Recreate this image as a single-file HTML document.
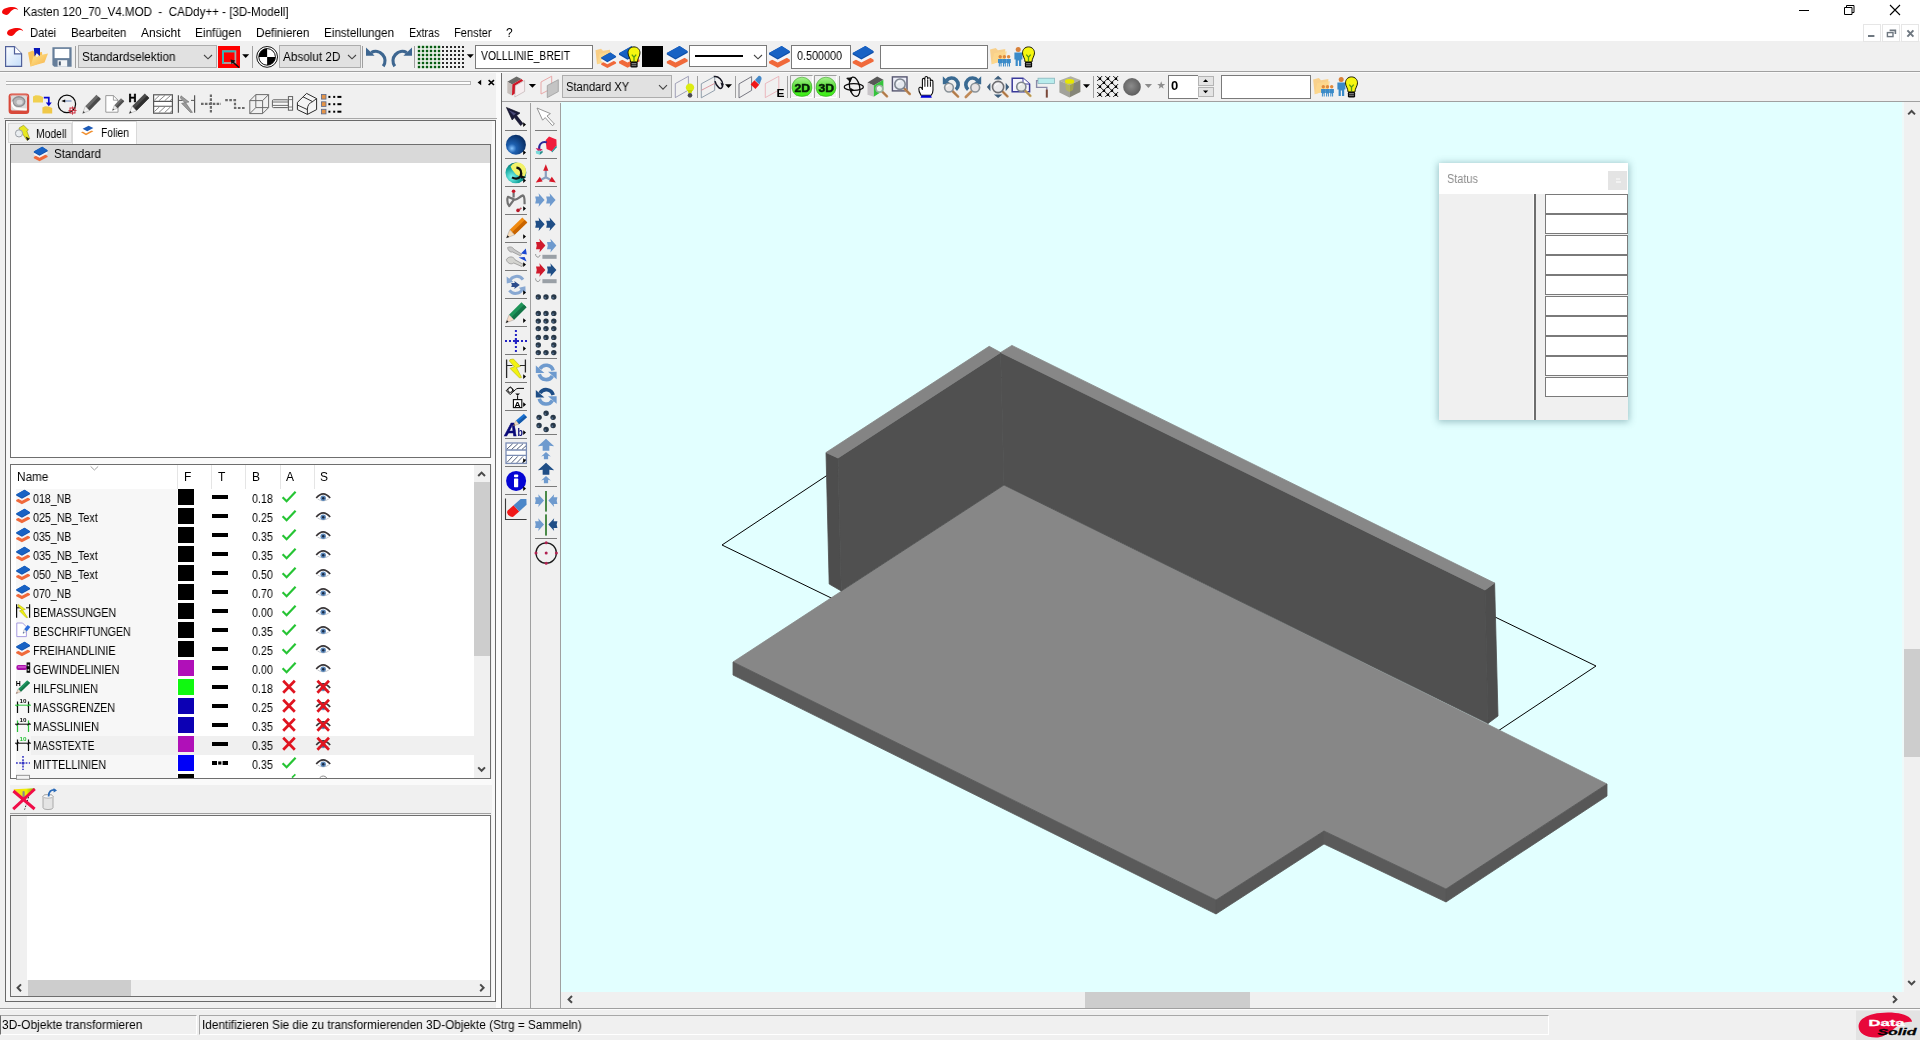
<!DOCTYPE html>
<html lang="de">
<head>
<meta charset="utf-8">
<title>Kasten 120_70_V4.MOD - CADdy++ - [3D-Modell]</title>
<style>
html,body{margin:0;padding:0}
body{width:1920px;height:1040px;overflow:hidden;position:relative;background:#f0f0f0;font-family:"Liberation Sans",sans-serif;font-size:12px;color:#000}
div,svg,span.t{position:absolute}
span.t{line-height:16px;white-space:pre;font-size:12px;will-change:transform}
svg{overflow:visible}
</style>
</head>
<body>
<!-- frame -->
<div style="left:0px;top:0px;width:1920px;height:41px;background:#fff;"></div>
<div style="left:0px;top:71px;width:1920px;height:1px;background:#a0a0a0;"></div>
<div style="left:0px;top:72px;width:1920px;height:1px;background:#fafafa;"></div>
<div style="left:6px;top:81px;width:465px;height:1px;background:#b4b4b4;"></div>
<div style="left:6px;top:82px;width:465px;height:2px;background:#fdfdfd;"></div>
<div style="left:6px;top:84px;width:465px;height:1px;background:#b4b4b4;"></div>
<div style="left:470px;top:81px;width:1px;height:4px;background:#b4b4b4;"></div>
<div style="left:496px;top:73px;width:5px;height:935px;background:#fbfbfb;"></div>
<div style="left:501px;top:73px;width:1px;height:935px;background:#6b6b6b;"></div>
<div style="left:4px;top:118px;width:493px;height:1px;background:#a8a8a8;"></div>
<div style="left:5px;top:120px;width:491px;height:882px;background:#f0f0f0;border:1px solid #696969;box-sizing:border-box;"></div>
<div style="left:492px;top:121px;width:3px;height:880px;background:#f8f8f8;"></div>
<div style="left:6px;top:458px;width:486px;height:6px;background:#fafafa;"></div>
<div style="left:6px;top:779px;width:486px;height:6px;background:#fafafa;"></div>
<div style="left:6px;top:121px;width:4px;height:880px;background:#f8f8f8;"></div>
<div style="left:8px;top:123px;width:64px;height:20px;background:#f0f0f0;border:1px solid #d9d9d9;box-sizing:border-box;"></div>
<div style="left:72px;top:121px;width:65px;height:23px;background:#fff;border:1px solid #d9d9d9;box-sizing:border-box;border-bottom:none;"></div>
<div style="left:10px;top:144px;width:481px;height:314px;background:#fff;border:1px solid #6e6e6e;box-sizing:border-box;"></div>
<div style="left:11px;top:145px;width:479px;height:18px;background:#d9d9d9;"></div>
<div style="left:10px;top:464px;width:481px;height:315px;background:#fff;border:1px solid #6e6e6e;box-sizing:border-box;"></div>
<div style="left:16px;top:489px;width:161px;height:289px;background:#f7f7f7;"></div>
<div style="left:177px;top:465px;width:1px;height:24px;background:#e5e5e5;"></div>
<div style="left:211px;top:465px;width:1px;height:24px;background:#e5e5e5;"></div>
<div style="left:245px;top:465px;width:1px;height:24px;background:#e5e5e5;"></div>
<div style="left:280px;top:465px;width:1px;height:24px;background:#e5e5e5;"></div>
<div style="left:314px;top:465px;width:1px;height:24px;background:#e5e5e5;"></div>
<div style="left:31px;top:736px;width:443px;height:19px;background:#f0f0f0;"></div>
<div style="left:474px;top:465px;width:16px;height:313px;background:#f0f0f0;"></div>
<div style="left:474px;top:482px;width:16px;height:174px;background:#cdcdcd;"></div>
<div style="left:10px;top:813px;width:481px;height:1px;background:#a0a0a0;"></div>
<div style="left:10px;top:815px;width:481px;height:182px;background:#fff;border:1px solid #6e6e6e;box-sizing:border-box;"></div>
<div style="left:11px;top:816px;width:16px;height:164px;background:#f0f0f0;"></div>
<div style="left:11px;top:980px;width:479px;height:16px;background:#f0f0f0;"></div>
<div style="left:28px;top:980px;width:103px;height:16px;background:#cdcdcd;"></div>
<div style="left:502px;top:101px;width:1418px;height:1px;background:#a0a0a0;"></div>
<div style="left:530px;top:103px;width:1px;height:905px;background:#a0a0a0;"></div>
<div style="left:560px;top:103px;width:1px;height:905px;background:#a0a0a0;"></div>
<div style="left:561px;top:102px;width:1343px;height:890px;background:#e2ffff;"></div>
<div style="left:1902px;top:102px;width:2px;height:890px;background:#eefafa;"></div>
<div style="left:1904px;top:102px;width:16px;height:890px;background:#f0f0f0;"></div>
<div style="left:1904px;top:649px;width:16px;height:108px;background:#cdcdcd;"></div>
<div style="left:561px;top:992px;width:1343px;height:16px;background:#f0f0f0;"></div>
<div style="left:1085px;top:992px;width:165px;height:16px;background:#cdcdcd;"></div>
<div style="left:0px;top:1008px;width:1920px;height:1px;background:#a0a0a0;"></div>
<div style="left:0px;top:1015px;width:197px;height:20px;background:#f0f0f0;box-sizing:border-box;border-top:1px solid #a8a8a8;border-left:1px solid #6e6e6e;border-right:1px solid #fff;border-bottom:1px solid #fff;"></div>
<div style="left:199px;top:1015px;width:1350px;height:20px;background:#f0f0f0;box-sizing:border-box;border-top:1px solid #a8a8a8;border-left:1px solid #a8a8a8;border-right:1px solid #fff;border-bottom:1px solid #fff;"></div>
<div style="left:0px;top:1009px;width:1920px;height:1px;background:#fbfbfb;"></div>
<!-- model -->
<svg style="left:561px;top:102px" width="1343" height="890" viewBox="561 102 1343 890" shape-rendering="auto"><polygon points="722,545 986,370 1596,666 1332,841" fill="none" stroke="#000" stroke-width="1"/><polygon points="733,662 1004,485 1487,724 1607,784 1446,889 1324,831 1216,900" fill="#878787" stroke="#878787" stroke-width="0.8" stroke-linejoin="round" /><polygon points="733,662 1216,900 1216,914 733,675" fill="#5a5a5a" stroke="#5a5a5a" stroke-width="0.8" stroke-linejoin="round" /><polygon points="1216,900 1324,831 1324,844 1216,914" fill="#575757" stroke="#575757" stroke-width="0.8" stroke-linejoin="round" /><polygon points="1324,831 1446,889 1446,902 1324,844" fill="#5a5a5a" stroke="#5a5a5a" stroke-width="0.8" stroke-linejoin="round" /><polygon points="1446,889 1607,784 1607,796 1446,902" fill="#575757" stroke="#575757" stroke-width="0.8" stroke-linejoin="round" /><polygon points="826,452.5 838,458 841.3,591 829.2,584" fill="#4d4d4d" stroke="#4d4d4d" stroke-width="0.8" stroke-linejoin="round" /><polygon points="838,458 1000.6,352.5 1004,485 841.3,591" fill="#505050" stroke="#505050" stroke-width="0.8" stroke-linejoin="round" /><polygon points="826,452.5 989.2,346.3 1000.6,352.5 838,458" fill="#848484" stroke="#848484" stroke-width="0.8" stroke-linejoin="round" /><polygon points="1000.6,352.5 1485,590 1488,723.4 1004,485" fill="#505050" stroke="#505050" stroke-width="0.8" stroke-linejoin="round" /><polygon points="1485,590 1494.6,583 1498,716 1488,723.4" fill="#4d4d4d" stroke="#4d4d4d" stroke-width="0.8" stroke-linejoin="round" /><polygon points="1000.6,352.5 1011.9,345.4 1494.6,583 1485,590" fill="#878787" stroke="#878787" stroke-width="0.8" stroke-linejoin="round" /></svg>
<!-- texts -->
<span class="t" style="left:23.0px;top:4px;transform:scaleX(0.9662);transform-origin:0 0;">Kasten 120_70_V4.MOD  -  CADdy++ - [3D-Modell]</span>
<span class="t" style="left:30.0px;top:25px;transform:scaleX(0.9352);transform-origin:0 0;">Datei</span>
<span class="t" style="left:70.8px;top:25px;transform:scaleX(0.9544);transform-origin:0 0;">Bearbeiten</span>
<span class="t" style="left:140.8px;top:25px;transform:scaleX(1.0036);transform-origin:0 0;">Ansicht</span>
<span class="t" style="left:194.8px;top:25px;transform:scaleX(0.9794);transform-origin:0 0;">Einfügen</span>
<span class="t" style="left:255.8px;top:25px;transform:scaleX(0.9762);transform-origin:0 0;">Definieren</span>
<span class="t" style="left:324.2px;top:25px;transform:scaleX(0.9714);transform-origin:0 0;">Einstellungen</span>
<span class="t" style="left:409.0px;top:25px;transform:scaleX(0.8966);transform-origin:0 0;">Extras</span>
<span class="t" style="left:454.0px;top:25px;transform:scaleX(0.9217);transform-origin:0 0;">Fenster</span>
<span class="t" style="left:506.2px;top:25px;">?</span>
<span class="t" style="left:1.8px;top:1017px;transform:scaleX(0.993);transform-origin:0 0;">3D-Objekte transformieren</span>
<span class="t" style="left:201.5px;top:1017px;transform:scaleX(0.9824);transform-origin:0 0;">Identifizieren Sie die zu transformierenden 3D-Objekte (Strg = Sammeln)</span>
<span class="t" style="left:35.5px;top:126px;transform:scaleX(0.8626);transform-origin:0 0;">Modell</span>
<span class="t" style="left:100.5px;top:125px;transform:scaleX(0.8566);transform-origin:0 0;">Folien</span>
<span class="t" style="left:53.5px;top:146px;transform:scaleX(0.965);transform-origin:0 0;">Standard</span>
<span class="t" style="left:17.1px;top:469px;transform:scaleX(0.9808);transform-origin:0 0;">Name</span>
<span class="t" style="left:184.3px;top:469px;">F</span>
<span class="t" style="left:217.8px;top:469px;">T</span>
<span class="t" style="left:252.0px;top:469px;">B</span>
<span class="t" style="left:286.0px;top:469px;">A</span>
<span class="t" style="left:320.0px;top:469px;">S</span>
<span class="t" style="left:32.9px;top:491px;transform:scaleX(0.8853);transform-origin:0 0;">018_NB</span>
<span class="t" style="left:251.7px;top:491px;transform:scaleX(0.8904);transform-origin:0 0;">0.18</span>
<span class="t" style="left:32.9px;top:510px;transform:scaleX(0.898);transform-origin:0 0;">025_NB_Text</span>
<span class="t" style="left:251.7px;top:510px;transform:scaleX(0.8904);transform-origin:0 0;">0.25</span>
<span class="t" style="left:32.9px;top:529px;transform:scaleX(0.8853);transform-origin:0 0;">035_NB</span>
<span class="t" style="left:251.7px;top:529px;transform:scaleX(0.8904);transform-origin:0 0;">0.35</span>
<span class="t" style="left:32.9px;top:548px;transform:scaleX(0.898);transform-origin:0 0;">035_NB_Text</span>
<span class="t" style="left:251.7px;top:548px;transform:scaleX(0.8904);transform-origin:0 0;">0.35</span>
<span class="t" style="left:32.9px;top:567px;transform:scaleX(0.898);transform-origin:0 0;">050_NB_Text</span>
<span class="t" style="left:251.7px;top:567px;transform:scaleX(0.8904);transform-origin:0 0;">0.50</span>
<span class="t" style="left:32.9px;top:586px;transform:scaleX(0.8853);transform-origin:0 0;">070_NB</span>
<span class="t" style="left:251.7px;top:586px;transform:scaleX(0.8904);transform-origin:0 0;">0.70</span>
<span class="t" style="left:32.9px;top:605px;transform:scaleX(0.889);transform-origin:0 0;">BEMASSUNGEN</span>
<span class="t" style="left:251.7px;top:605px;transform:scaleX(0.8904);transform-origin:0 0;">0.00</span>
<span class="t" style="left:32.9px;top:624px;transform:scaleX(0.8766);transform-origin:0 0;">BESCHRIFTUNGEN</span>
<span class="t" style="left:251.7px;top:624px;transform:scaleX(0.8904);transform-origin:0 0;">0.35</span>
<span class="t" style="left:32.9px;top:643px;transform:scaleX(0.9052);transform-origin:0 0;">FREIHANDLINIE</span>
<span class="t" style="left:251.7px;top:643px;transform:scaleX(0.8904);transform-origin:0 0;">0.25</span>
<span class="t" style="left:32.9px;top:662px;transform:scaleX(0.9009);transform-origin:0 0;">GEWINDELINIEN</span>
<span class="t" style="left:251.7px;top:662px;transform:scaleX(0.8904);transform-origin:0 0;">0.00</span>
<span class="t" style="left:32.9px;top:681px;transform:scaleX(0.8942);transform-origin:0 0;">HILFSLINIEN</span>
<span class="t" style="left:251.7px;top:681px;transform:scaleX(0.8904);transform-origin:0 0;">0.18</span>
<span class="t" style="left:32.9px;top:700px;transform:scaleX(0.8847);transform-origin:0 0;">MASSGRENZEN</span>
<span class="t" style="left:251.7px;top:700px;transform:scaleX(0.8904);transform-origin:0 0;">0.25</span>
<span class="t" style="left:32.9px;top:719px;transform:scaleX(0.908);transform-origin:0 0;">MASSLINIEN</span>
<span class="t" style="left:251.7px;top:719px;transform:scaleX(0.8904);transform-origin:0 0;">0.35</span>
<span class="t" style="left:32.9px;top:738px;transform:scaleX(0.8433);transform-origin:0 0;">MASSTEXTE</span>
<span class="t" style="left:251.7px;top:738px;transform:scaleX(0.8904);transform-origin:0 0;">0.35</span>
<span class="t" style="left:32.9px;top:757px;transform:scaleX(0.8973);transform-origin:0 0;">MITTELLINIEN</span>
<span class="t" style="left:251.7px;top:757px;transform:scaleX(0.8904);transform-origin:0 0;">0.35</span>
<!-- icons_top -->
<div style="left:78px;top:45px;width:139px;height:23px;background:#e1e1e1;border:1px solid #adadad;box-sizing:border-box;"></div>
<span class="t" style="left:81.8px;top:49px;transform:scaleX(0.9721);transform-origin:0 0;">Standardselektion</span>
<div style="left:279px;top:45px;width:82px;height:23px;background:#e1e1e1;border:1px solid #adadad;box-sizing:border-box;"></div>
<span class="t" style="left:282.8px;top:49px;transform:scaleX(0.9778);transform-origin:0 0;">Absolut 2D</span>
<div style="left:475px;top:45px;width:118px;height:24px;background:#fff;border:1px solid #7a7a7a;box-sizing:border-box;"></div>
<span class="t" style="left:480.8px;top:48px;transform:scaleX(0.8664);transform-origin:0 0;">VOLLLINIE_BREIT</span>
<div style="left:689px;top:45px;width:78px;height:22px;background:#fff;border:1px solid #7a7a7a;box-sizing:border-box;"></div>
<div style="left:791px;top:45px;width:60px;height:24px;background:#fff;border:1px solid #7a7a7a;box-sizing:border-box;"></div>
<span class="t" style="left:796.8px;top:48px;transform:scaleX(0.8989);transform-origin:0 0;">0.500000</span>
<div style="left:880px;top:45px;width:108px;height:24px;background:#fff;border:1px solid #7a7a7a;box-sizing:border-box;"></div>
<div style="left:562px;top:75px;width:110px;height:23px;background:#e1e1e1;border:1px solid #adadad;box-sizing:border-box;"></div>
<span class="t" style="left:566.0px;top:79px;transform:scaleX(0.9288);transform-origin:0 0;">Standard XY</span>
<div style="left:1221px;top:75px;width:90px;height:24px;background:#fff;border:1px solid #7a7a7a;box-sizing:border-box;"></div>
<svg style="left:0;top:0" width="1920" height="110" viewBox="0 0 1920 110"><defs><linearGradient id="gdoc" x1="0" y1="0" x2="1" y2="1"><stop offset="0" stop-color="#fdfeff"/><stop offset="1" stop-color="#c4ddfa"/></linearGradient><linearGradient id="gfold" x1="0" y1="0" x2="1" y2="1"><stop offset="0" stop-color="#fde890"/><stop offset="1" stop-color="#f8b048"/></linearGradient><linearGradient id="g2d" x1="0" y1="0" x2="0" y2="1"><stop offset="0" stop-color="#a8f090"/><stop offset="0.45" stop-color="#60e040"/><stop offset="1" stop-color="#38f010"/></linearGradient><radialGradient id="gsph" cx="0.45" cy="0.45" r="0.6"><stop offset="0" stop-color="#8c8c8c"/><stop offset="1" stop-color="#5a5a5a"/></radialGradient></defs><path d="M5.6,46.6 H14.5 L21.6,53.8 V66.3 H5.6Z" fill="url(#gdoc)" stroke="#50609a" stroke-width="1.2"/><path d="M14.5,46.6 V53.8 H21.6" fill="#fff" stroke="#50609a" stroke-width="1.2"/><path d="M28,52.5 L33,50.5 L35,53 L42,52 L42.5,62 L30.5,66.5Z" fill="#f8c058"/><path d="M30.5,66.5 L33.5,56.5 L48,53.5 L44.5,62.5Z" fill="url(#gfold)"/><path d="M33.8,48 H40 V56 L36.8,53.2 L34.6,56.5Z" fill="#0a18b8"/><path d="M36.8,53.2 L38.6,55.4 L36.9,57.2 L35.6,55.4Z" fill="#e8ecff"/><path d="M52.4,47.3 H71.6 V66.7 H54.2 L52.4,65Z" fill="#667e9a"/><rect x="54.6" y="48.9" width="14.7" height="9.2" fill="#fff"/><rect x="57.6" y="60.2" width="9.6" height="6.5" fill="#f4f6f8"/><rect x="58.8" y="61.4" width="2" height="4" fill="#4a5a70"/><rect x="75" y="46" width="1" height="22" fill="#a0a0a0"/><rect x="252" y="46" width="1" height="22" fill="#a0a0a0"/><rect x="362" y="46" width="1" height="22" fill="#a0a0a0"/><rect x="414" y="46" width="1" height="22" fill="#a0a0a0"/><rect x="218" y="46" width="22" height="22" fill="#f00"/><rect x="223" y="51.3" width="12.4" height="11.7" fill="none" stroke="#a8a8a8" stroke-width="1.8"/><path d="M223,63.5 V51.3 H235.5" fill="none" stroke="#2ab8b8" stroke-width="1.8"/><path d="M230.5,59.5 L235.2,60.6 L234,62 L239.5,67 L238.5,68 L232.8,63 L231.6,64.2Z" fill="#101010"/><path d="M242.2,54.3 h7 l-3.5,3.8Z" fill="#000"/><circle cx="267.1" cy="56.9" r="10.4" fill="#fff" stroke="#111" stroke-width="1"/><circle cx="267.1" cy="56.9" r="8.3" fill="#fff" stroke="#111" stroke-width="1"/><path d="M267.1,56.9 V48.6 A8.3,8.3 0 0 0 258.8,56.9Z" fill="#000"/><path d="M267.1,56.9 V65.2 A8.3,8.3 0 0 0 275.4,56.9Z" fill="#000"/><path d="M371.2,52.6 A9.3,9.3 0 0 1 383.2,66.2" fill="none" stroke="#3d6690" stroke-width="3.2"/><path d="M366,47.6 V55.8 H374.6Z" fill="#3d6690"/><path d="M406.8,52.6 A9.3,9.3 0 0 0 394.8,66.2" fill="none" stroke="#3d6690" stroke-width="3.2"/><path d="M412,47.6 V55.8 H403.4Z" fill="#3d6690"/><rect x="417.8" y="45.8" width="2.4" height="2.4" fill="#0b7a0b"/><rect x="418.4" y="46.4" width="1.2" height="1.2" fill="#022"/><rect x="421.8" y="45.8" width="2.4" height="2.4" fill="#0b7a0b"/><rect x="422.4" y="46.4" width="1.2" height="1.2" fill="#022"/><rect x="425.8" y="45.8" width="2.4" height="2.4" fill="#0b7a0b"/><rect x="426.4" y="46.4" width="1.2" height="1.2" fill="#022"/><rect x="429.8" y="45.8" width="2.4" height="2.4" fill="#0b7a0b"/><rect x="430.4" y="46.4" width="1.2" height="1.2" fill="#022"/><rect x="433.8" y="45.8" width="2.4" height="2.4" fill="#0b7a0b"/><rect x="434.4" y="46.4" width="1.2" height="1.2" fill="#022"/><rect x="437.8" y="45.8" width="2.4" height="2.4" fill="#0b7a0b"/><rect x="438.4" y="46.4" width="1.2" height="1.2" fill="#022"/><rect x="442.0" y="46.0" width="2" height="2" fill="#2a2a2a"/><rect x="446.0" y="46.0" width="2" height="2" fill="#2a2a2a"/><rect x="450.0" y="46.0" width="2" height="2" fill="#2a2a2a"/><rect x="454.0" y="46.0" width="2" height="2" fill="#2a2a2a"/><rect x="458.0" y="46.0" width="2" height="2" fill="#2a2a2a"/><rect x="462.0" y="46.0" width="2" height="2" fill="#2a2a2a"/><rect x="417.8" y="49.8" width="2.4" height="2.4" fill="#0b7a0b"/><rect x="418.4" y="50.4" width="1.2" height="1.2" fill="#022"/><rect x="421.8" y="49.8" width="2.4" height="2.4" fill="#0b7a0b"/><rect x="422.4" y="50.4" width="1.2" height="1.2" fill="#022"/><rect x="425.8" y="49.8" width="2.4" height="2.4" fill="#0b7a0b"/><rect x="426.4" y="50.4" width="1.2" height="1.2" fill="#022"/><rect x="429.8" y="49.8" width="2.4" height="2.4" fill="#0b7a0b"/><rect x="430.4" y="50.4" width="1.2" height="1.2" fill="#022"/><rect x="433.8" y="49.8" width="2.4" height="2.4" fill="#0b7a0b"/><rect x="434.4" y="50.4" width="1.2" height="1.2" fill="#022"/><rect x="437.8" y="49.8" width="2.4" height="2.4" fill="#0b7a0b"/><rect x="438.4" y="50.4" width="1.2" height="1.2" fill="#022"/><rect x="442.0" y="50.0" width="2" height="2" fill="#2a2a2a"/><rect x="446.0" y="50.0" width="2" height="2" fill="#2a2a2a"/><rect x="450.0" y="50.0" width="2" height="2" fill="#2a2a2a"/><rect x="454.0" y="50.0" width="2" height="2" fill="#2a2a2a"/><rect x="458.0" y="50.0" width="2" height="2" fill="#2a2a2a"/><rect x="462.0" y="50.0" width="2" height="2" fill="#2a2a2a"/><rect x="417.8" y="53.8" width="2.4" height="2.4" fill="#0b7a0b"/><rect x="418.4" y="54.4" width="1.2" height="1.2" fill="#022"/><rect x="421.8" y="53.8" width="2.4" height="2.4" fill="#0b7a0b"/><rect x="422.4" y="54.4" width="1.2" height="1.2" fill="#022"/><rect x="425.8" y="53.8" width="2.4" height="2.4" fill="#0b7a0b"/><rect x="426.4" y="54.4" width="1.2" height="1.2" fill="#022"/><rect x="429.8" y="53.8" width="2.4" height="2.4" fill="#0b7a0b"/><rect x="430.4" y="54.4" width="1.2" height="1.2" fill="#022"/><rect x="433.8" y="53.8" width="2.4" height="2.4" fill="#0b7a0b"/><rect x="434.4" y="54.4" width="1.2" height="1.2" fill="#022"/><rect x="437.8" y="53.8" width="2.4" height="2.4" fill="#0b7a0b"/><rect x="438.4" y="54.4" width="1.2" height="1.2" fill="#022"/><rect x="442.0" y="54.0" width="2" height="2" fill="#2a2a2a"/><rect x="446.0" y="54.0" width="2" height="2" fill="#2a2a2a"/><rect x="450.0" y="54.0" width="2" height="2" fill="#2a2a2a"/><rect x="454.0" y="54.0" width="2" height="2" fill="#2a2a2a"/><rect x="458.0" y="54.0" width="2" height="2" fill="#2a2a2a"/><rect x="462.0" y="54.0" width="2" height="2" fill="#2a2a2a"/><rect x="417.8" y="57.8" width="2.4" height="2.4" fill="#0b7a0b"/><rect x="418.4" y="58.4" width="1.2" height="1.2" fill="#022"/><rect x="421.8" y="57.8" width="2.4" height="2.4" fill="#0b7a0b"/><rect x="422.4" y="58.4" width="1.2" height="1.2" fill="#022"/><rect x="425.8" y="57.8" width="2.4" height="2.4" fill="#0b7a0b"/><rect x="426.4" y="58.4" width="1.2" height="1.2" fill="#022"/><rect x="429.8" y="57.8" width="2.4" height="2.4" fill="#0b7a0b"/><rect x="430.4" y="58.4" width="1.2" height="1.2" fill="#022"/><rect x="433.8" y="57.8" width="2.4" height="2.4" fill="#0b7a0b"/><rect x="434.4" y="58.4" width="1.2" height="1.2" fill="#022"/><rect x="437.8" y="57.8" width="2.4" height="2.4" fill="#0b7a0b"/><rect x="438.4" y="58.4" width="1.2" height="1.2" fill="#022"/><rect x="442.0" y="58.0" width="2" height="2" fill="#2a2a2a"/><rect x="446.0" y="58.0" width="2" height="2" fill="#2a2a2a"/><rect x="450.0" y="58.0" width="2" height="2" fill="#2a2a2a"/><rect x="454.0" y="58.0" width="2" height="2" fill="#2a2a2a"/><rect x="458.0" y="58.0" width="2" height="2" fill="#2a2a2a"/><rect x="462.0" y="58.0" width="2" height="2" fill="#2a2a2a"/><rect x="417.8" y="61.8" width="2.4" height="2.4" fill="#0b7a0b"/><rect x="418.4" y="62.4" width="1.2" height="1.2" fill="#022"/><rect x="421.8" y="61.8" width="2.4" height="2.4" fill="#0b7a0b"/><rect x="422.4" y="62.4" width="1.2" height="1.2" fill="#022"/><rect x="425.8" y="61.8" width="2.4" height="2.4" fill="#0b7a0b"/><rect x="426.4" y="62.4" width="1.2" height="1.2" fill="#022"/><rect x="429.8" y="61.8" width="2.4" height="2.4" fill="#0b7a0b"/><rect x="430.4" y="62.4" width="1.2" height="1.2" fill="#022"/><rect x="433.8" y="61.8" width="2.4" height="2.4" fill="#0b7a0b"/><rect x="434.4" y="62.4" width="1.2" height="1.2" fill="#022"/><rect x="437.8" y="61.8" width="2.4" height="2.4" fill="#0b7a0b"/><rect x="438.4" y="62.4" width="1.2" height="1.2" fill="#022"/><rect x="442.0" y="62.0" width="2" height="2" fill="#2a2a2a"/><rect x="446.0" y="62.0" width="2" height="2" fill="#2a2a2a"/><rect x="450.0" y="62.0" width="2" height="2" fill="#2a2a2a"/><rect x="454.0" y="62.0" width="2" height="2" fill="#2a2a2a"/><rect x="458.0" y="62.0" width="2" height="2" fill="#2a2a2a"/><rect x="462.0" y="62.0" width="2" height="2" fill="#2a2a2a"/><rect x="417.8" y="65.8" width="2.4" height="2.4" fill="#0b7a0b"/><rect x="418.4" y="66.4" width="1.2" height="1.2" fill="#022"/><rect x="421.8" y="65.8" width="2.4" height="2.4" fill="#0b7a0b"/><rect x="422.4" y="66.4" width="1.2" height="1.2" fill="#022"/><rect x="425.8" y="65.8" width="2.4" height="2.4" fill="#0b7a0b"/><rect x="426.4" y="66.4" width="1.2" height="1.2" fill="#022"/><rect x="429.8" y="65.8" width="2.4" height="2.4" fill="#0b7a0b"/><rect x="430.4" y="66.4" width="1.2" height="1.2" fill="#022"/><rect x="433.8" y="65.8" width="2.4" height="2.4" fill="#0b7a0b"/><rect x="434.4" y="66.4" width="1.2" height="1.2" fill="#022"/><rect x="437.8" y="65.8" width="2.4" height="2.4" fill="#0b7a0b"/><rect x="438.4" y="66.4" width="1.2" height="1.2" fill="#022"/><rect x="442.0" y="66.0" width="2" height="2" fill="#2a2a2a"/><rect x="446.0" y="66.0" width="2" height="2" fill="#2a2a2a"/><rect x="450.0" y="66.0" width="2" height="2" fill="#2a2a2a"/><rect x="454.0" y="66.0" width="2" height="2" fill="#2a2a2a"/><rect x="458.0" y="66.0" width="2" height="2" fill="#2a2a2a"/><rect x="462.0" y="66.0" width="2" height="2" fill="#2a2a2a"/><path d="M466.8,54.3 h7 l-3.5,3.8Z" fill="#000"/><g transform="translate(595 48.2)"><path d="M0.5,2 L6,0.5 L8,2.5 L15,1.5 L15,12 L2,16Z" fill="#fbc56a" opacity="0.8"/><path d="M2,16 L4.5,5.5 L16.5,3.5 L15,12Z" fill="#fdd98e" opacity="0.8"/></g><g transform="translate(601.2 52.5) scale(0.71)"><path d="M0,15.6 L12.7,8.6 L20.9,13.8 L20.9,15.6 L8.7,21.8 L0,17.2Z" fill="#f0693a"/><path d="M0,10.4 L12.7,3.4 L20.9,8.6 L20.9,10.2 L8.7,16.6 L0,12Z" fill="#f4f4f8"/><path d="M0,7 L12.7,0 L20.9,5.2 L20.9,6.8 L8.7,13.6 L0,8.6Z" fill="#0f4fa8"/><path d="M0,7 L12.7,0 L20.9,5.2 L8.7,12.3Z" fill="#1862c4"/></g><g transform="translate(619 46.3) scale(0.98)"><path d="M0,15.6 L12.7,8.6 L20.9,13.8 L20.9,15.6 L8.7,21.8 L0,17.2Z" fill="#f0693a"/><path d="M0,10.4 L12.7,3.4 L20.9,8.6 L20.9,10.2 L8.7,16.6 L0,12Z" fill="#f4f4f8"/><path d="M0,7 L12.7,0 L20.9,5.2 L20.9,6.8 L8.7,13.6 L0,8.6Z" fill="#0f4fa8"/><path d="M0,7 L12.7,0 L20.9,5.2 L8.7,12.3Z" fill="#1862c4"/></g><g transform="translate(634 46.6)"><path d="M0,0.3 C3.6,0.3 6,3 6,6.2 C6,9.6 3.7,11.2 3.4,15.4 L-3.4,15.4 C-3.7,11.2 -6,9.6 -6,6.2 C-6,3 -3.6,0.3 0,0.3Z" fill="#f6f610" stroke="#1a1a00" stroke-width="1"/><path d="M-2.2,8 L0,10.6 L2.2,8 M0,10.6 L0,15" fill="none" stroke="#5a9a14" stroke-width="1.3"/><rect x="-3.6" y="15.2" width="7.2" height="5.8" rx="1.4" fill="#0a0a0a"/><rect x="-2.4" y="16.6" width="4.8" height="1.1" fill="#9a9a9a"/><rect x="-2.4" y="18.5" width="4.8" height="1" fill="#777"/></g><rect x="642" y="46" width="21" height="21" fill="#000"/><g transform="translate(666.8 46)"><path d="M0,15.6 L12.7,8.6 L20.9,13.8 L20.9,15.6 L8.7,21.8 L0,17.2Z" fill="#f0693a"/><path d="M0,10.4 L12.7,3.4 L20.9,8.6 L20.9,10.2 L8.7,16.6 L0,12Z" fill="#f4f4f8"/><path d="M0,7 L12.7,0 L20.9,5.2 L20.9,6.8 L8.7,13.6 L0,8.6Z" fill="#0f4fa8"/><path d="M0,7 L12.7,0 L20.9,5.2 L8.7,12.3Z" fill="#1862c4"/></g><g transform="translate(769 46)"><path d="M0,15.6 L12.7,8.6 L20.9,13.8 L20.9,15.6 L8.7,21.8 L0,17.2Z" fill="#f0693a"/><path d="M0,10.4 L12.7,3.4 L20.9,8.6 L20.9,10.2 L8.7,16.6 L0,12Z" fill="#f4f4f8"/><path d="M0,7 L12.7,0 L20.9,5.2 L20.9,6.8 L8.7,13.6 L0,8.6Z" fill="#0f4fa8"/><path d="M0,7 L12.7,0 L20.9,5.2 L8.7,12.3Z" fill="#1862c4"/></g><g transform="translate(852.7 46)"><path d="M0,15.6 L12.7,8.6 L20.9,13.8 L20.9,15.6 L8.7,21.8 L0,17.2Z" fill="#f0693a"/><path d="M0,10.4 L12.7,3.4 L20.9,8.6 L20.9,10.2 L8.7,16.6 L0,12Z" fill="#f4f4f8"/><path d="M0,7 L12.7,0 L20.9,5.2 L20.9,6.8 L8.7,13.6 L0,8.6Z" fill="#0f4fa8"/><path d="M0,7 L12.7,0 L20.9,5.2 L8.7,12.3Z" fill="#1862c4"/></g><rect x="695" y="55" width="48" height="2" fill="#000"/><path d="M754,55 l4.0,3.8 l4.0,-3.8" fill="none" stroke="#444" stroke-width="1.1"/><g transform="translate(989.5 47.5) scale(1.05)"><path d="M0.5,2 L6,0.5 L8,2.5 L15,1.5 L15,12 L2,16Z" fill="#fbc56a" opacity="0.75"/><path d="M2,16 L4.5,5.5 L16.5,3.5 L15,12Z" fill="#fdd98e" opacity="0.75"/></g><g transform="translate(998.0 55.1)"><circle cx="2.2" cy="1.6" r="1.7" fill="#e08a3c"/><path d="M0,4 h4.4 v4 h-0.8 v3.5 h-1 v-3 h-0.8 v3 h-1 v-3.5 h-0.8Z" fill="#3a8ac8"/><circle cx="6.4" cy="1.6" r="1.7" fill="#e08a3c"/><path d="M4.2,4 h4.4 v4 h-0.8 v3.5 h-1 v-3 h-0.8 v3 h-1 v-3.5 h-0.8Z" fill="#3a8ac8"/><circle cx="10.600000000000001" cy="1.6" r="1.7" fill="#e08a3c"/><path d="M8.4,4 h4.4 v4 h-0.8 v3.5 h-1 v-3 h-0.8 v3 h-1 v-3.5 h-0.8Z" fill="#3a8ac8"/></g><g transform="translate(1312.6 77.5) scale(1.05)"><path d="M0.5,2 L6,0.5 L8,2.5 L15,1.5 L15,12 L2,16Z" fill="#fbc56a" opacity="0.75"/><path d="M2,16 L4.5,5.5 L16.5,3.5 L15,12Z" fill="#fdd98e" opacity="0.75"/></g><g transform="translate(1321.1 85.1)"><circle cx="2.2" cy="1.6" r="1.7" fill="#e08a3c"/><path d="M0,4 h4.4 v4 h-0.8 v3.5 h-1 v-3 h-0.8 v3 h-1 v-3.5 h-0.8Z" fill="#3a8ac8"/><circle cx="6.4" cy="1.6" r="1.7" fill="#e08a3c"/><path d="M4.2,4 h4.4 v4 h-0.8 v3.5 h-1 v-3 h-0.8 v3 h-1 v-3.5 h-0.8Z" fill="#3a8ac8"/><circle cx="10.600000000000001" cy="1.6" r="1.7" fill="#e08a3c"/><path d="M8.4,4 h4.4 v4 h-0.8 v3.5 h-1 v-3 h-0.8 v3 h-1 v-3.5 h-0.8Z" fill="#3a8ac8"/></g><g transform="translate(1014 46.8)"><circle cx="4.2" cy="2.6" r="2.5" fill="#d8803a"/><path d="M0.4,5.6 h8 v7 h-1.2 v6.6 h-2.2 v-5.6 h-1.2 v5.6 h-2.2 v-6.6 h-1.2Z" fill="#3a8ac8"/></g><g transform="translate(1028.5 46.599999999999994)"><path d="M0,0.3 C3.6,0.3 6,3 6,6.2 C6,9.6 3.7,11.2 3.4,15.4 L-3.4,15.4 C-3.7,11.2 -6,9.6 -6,6.2 C-6,3 -3.6,0.3 0,0.3Z" fill="#f6f610" stroke="#1a1a00" stroke-width="1"/><path d="M-2.2,8 L0,10.6 L2.2,8 M0,10.6 L0,15" fill="none" stroke="#5a9a14" stroke-width="1.3"/><rect x="-3.6" y="15.2" width="7.2" height="5.8" rx="1.4" fill="#0a0a0a"/><rect x="-2.4" y="16.6" width="4.8" height="1.1" fill="#9a9a9a"/><rect x="-2.4" y="18.5" width="4.8" height="1" fill="#777"/></g><g transform="translate(1337 76.8)"><circle cx="4.2" cy="2.6" r="2.5" fill="#d8803a"/><path d="M0.4,5.6 h8 v7 h-1.2 v6.6 h-2.2 v-5.6 h-1.2 v5.6 h-2.2 v-6.6 h-1.2Z" fill="#3a8ac8"/></g><g transform="translate(1351.5 76.6)"><path d="M0,0.3 C3.6,0.3 6,3 6,6.2 C6,9.6 3.7,11.2 3.4,15.4 L-3.4,15.4 C-3.7,11.2 -6,9.6 -6,6.2 C-6,3 -3.6,0.3 0,0.3Z" fill="#f6f610" stroke="#1a1a00" stroke-width="1"/><path d="M-2.2,8 L0,10.6 L2.2,8 M0,10.6 L0,15" fill="none" stroke="#5a9a14" stroke-width="1.3"/><rect x="-3.6" y="15.2" width="7.2" height="5.8" rx="1.4" fill="#0a0a0a"/><rect x="-2.4" y="16.6" width="4.8" height="1.1" fill="#9a9a9a"/><rect x="-2.4" y="18.5" width="4.8" height="1" fill="#777"/></g><path d="M204,55 l4.0,3.8 l4.0,-3.8" fill="none" stroke="#444" stroke-width="1.1"/><path d="M348,55 l4.0,3.8 l4.0,-3.8" fill="none" stroke="#444" stroke-width="1.1"/></svg>
<!-- icons_top2 -->
<div style="left:1168px;top:75px;width:30px;height:24px;background:#fff;border:1px solid #7a7a7a;box-sizing:border-box;border-right:none;"></div>
<span class="t" style="left:1170.9px;top:78px;font-size:13px;font-weight:bold;">0</span>
<svg style="left:0;top:0" width="1920" height="110" viewBox="0 0 1920 110"><path d="M507.3,81.8 L516.5,76.6 L521.5,79 L512.2,84.6Z" fill="#6a6a68"/><path d="M512.2,84.6 L521.5,79 L523.2,80.8 L515.4,85.6 L515,93.5 L512,95.6Z" fill="#d01626"/><path d="M507.3,81.8 L512.2,84.6 L512,95.6 L507.3,93Z" fill="#c6beba"/><path d="M515.4,85.6 L524.6,80.5 V91.5 L514.8,97Z" fill="#f7eef0" stroke="#b8a8a8" stroke-width="0.6"/><path d="M528.8,84 h7.2 l-3.6,3.8Z" fill="#000"/><path d="M541,82 L551.7,76.2 V88.5 L541,94Z" fill="none" stroke="#e6a0a0" stroke-width="0.9"/><path d="M547.3,85.5 L558.3,79.7 V91.6 L547.3,97.6Z" fill="#c4c4c4" stroke="#9a9a9a" stroke-width="0.8"/><path d="M659,85.2 l4.0,4 l4.0,-4" fill="none" stroke="#444" stroke-width="1.1"/><path d="M675.3,83.6 L688.4,76.3 V90.1 L675.3,97.6Z" fill="none" stroke="#8c8ca8" stroke-width="0.8"/><circle cx="690" cy="87.6" r="4.2" fill="#dcec10"/><path d="M687.6,90 L692.4,90 L691.6,93 L688.4,93Z" fill="#c8d800"/><ellipse cx="690" cy="95.3" rx="2.3" ry="2.4" fill="#4a4a52"/><rect x="697" y="76" width="1" height="22" fill="#a0a0a0"/><rect x="735" y="76" width="1" height="22" fill="#a0a0a0"/><rect x="787" y="76" width="1" height="22" fill="#a0a0a0"/><rect x="839" y="76" width="1" height="22" fill="#a0a0a0"/><rect x="1093" y="76" width="1" height="22" fill="#a0a0a0"/><path d="M701.3,83.8 L714.6999999999999,76.5 V90.3 L701.3,97.8Z" fill="none" stroke="#7a8a9a" stroke-width="0.8"/><path d="M701.3,90.3 L714.7,83.4" stroke="#d89098" stroke-width="0.9" fill="none"/><path d="M713.8,76.6 C718.6,75.6 722.8,80.6 722.8,84.6 C722.8,88.4 720.6,89.2 718.8,87.6 C716.6,85.6 715.4,83.4 715,81.2" fill="none" stroke="#161622" stroke-width="1.5"/><path d="M720.4,82.6 L723.8,84 L721.8,86.6Z" fill="#161622"/><path d="M725,84.2 h7 l-3.5,3.8Z" fill="#000"/><path d="M739,83.89999999999999 L751.6,76.6 V90.39999999999999 L739,97.89999999999999Z" fill="none" stroke="#62626e" stroke-width="0.85"/><path d="M750.6,84.3 L754.6,80.3 L759.2,84.9 L755.2,88.9Z" fill="#f01818" transform="rotate(-3 755 84)"/><path d="M754.6,80.3 L758.2,76.4 C759.6,75.6 761.6,77.6 761.3,79.4 L759.2,84.9Z" fill="#4488c8" transform="translate(0.3 -0.4)"/><path d="M765.3,83.6 L778.8,76.3 V90.1 L765.3,97.6Z" fill="none" stroke="#e8a8b0" stroke-width="0.8"/><text x="776.6" y="97.4" font-family="Liberation Sans,sans-serif" font-weight="bold" font-size="11.5" fill="#000" textLength="8" lengthAdjust="spacingAndGlyphs">E</text><path d="M790.5,98 V75.5 H812.5" fill="none" stroke="#a0a0a0" stroke-width="1"/><path d="M812.5,76 V97.5 H791" fill="none" stroke="#fff" stroke-width="1"/><path d="M796,95.2 A10,10 0 1 1 808,95.2 Q802,97.6 796,95.2Z" fill="url(#g2d)" stroke="#3aa02a" stroke-width="0.6"/><text x="794.4" y="92.4" font-family="Liberation Sans,sans-serif" font-weight="bold" font-size="11.8" fill="#062006" stroke="#062006" stroke-width="0.5" textLength="15.6" lengthAdjust="spacingAndGlyphs">2D</text><path d="M814.5,98 V75.5 H836.5" fill="none" stroke="#a0a0a0" stroke-width="1"/><path d="M836.5,76 V97.5 H815" fill="none" stroke="#fff" stroke-width="1"/><path d="M820,95.2 A10,10 0 1 1 832,95.2 Q826,97.6 820,95.2Z" fill="url(#g2d)" stroke="#3aa02a" stroke-width="0.6"/><text x="818.4" y="92.4" font-family="Liberation Sans,sans-serif" font-weight="bold" font-size="11.8" fill="#062006" stroke="#062006" stroke-width="0.5" textLength="15.6" lengthAdjust="spacingAndGlyphs">3D</text><ellipse cx="853.8" cy="87" rx="9.6" ry="3.4" fill="none" stroke="#0a0a0a" stroke-width="1.3"/><ellipse cx="854.6" cy="86.8" rx="5" ry="9.8" fill="none" stroke="#0a0a0a" stroke-width="1.3" transform="rotate(-12 854.6 86.8)"/><path d="M846.8,78.2 L851.6,78 L850.2,81.6Z" fill="#0a0a0a" stroke="#0a0a0a" stroke-width="1"/><path d="M850.4,87.8 L854.4,90.2 L850.4,92.2Z" fill="#0a0a0a"/><path d="M867.5,82.6 L877.2,76.4 L883.4,79.8 L873.8,85.6Z" fill="#585858"/><path d="M867.5,82.6 L873.8,85.6 V96.8 L867.5,94.8Z" fill="#c8c4c8"/><path d="M873.8,85.6 L883.4,79.8 V90.5 L873.8,96.8Z" fill="#34c43c"/><line x1="881.73" y1="91.13" x2="886.97" y2="96.37" stroke="#c08a58" stroke-width="2.6" stroke-linecap="round"/><line x1="881.73" y1="91.13" x2="886.97" y2="96.37" stroke="#8a5a30" stroke-width="0.6"/><circle cx="879.4" cy="88.8" r="3.3" fill="#e4f4e8" stroke="#9ab0a0" stroke-width="1.6"/><path d="M877.58,88.47 A1.98,1.98 0 0 1 879.73,86.82" fill="none" stroke="#fff" stroke-width="1"/><rect x="892.4" y="76.9" width="14.6" height="14" fill="#ecedf8" stroke="#55556e" stroke-width="1.4"/><line x1="903.68" y1="87.88" x2="909.76" y2="93.96" stroke="#c08a58" stroke-width="2.6" stroke-linecap="round"/><line x1="903.68" y1="87.88" x2="909.76" y2="93.96" stroke="#8a5a30" stroke-width="0.6"/><circle cx="900" cy="84.2" r="5.2" fill="#e4e8ee" stroke="#7e8690" stroke-width="1.6"/><path d="M897.14,83.68 A3.12,3.12 0 0 1 900.52,81.08" fill="none" stroke="#fff" stroke-width="1"/><path d="M921,95.2 C919.6,93 918.6,90.6 918.8,88.8 C919,87.2 920.8,86.6 921.8,88.2 L922.4,89.4 L922.4,79.6 C922.4,78 924.8,78 924.8,79.6 L924.9,77.8 C925,76 927.6,76 927.6,77.8 L927.7,78.8 C927.8,77.4 930.2,77.4 930.3,78.8 L930.4,81 C930.6,79.8 932.8,79.8 932.9,81.2 L933,90 C933,92.4 932.2,94 931.2,95.2Z" fill="#fff" stroke="#0a0a0a" stroke-width="1.1" stroke-linejoin="round"/><path d="M924.9,80 V86.8 M927.7,79.5 V86.8 M930.4,81.5 V86.8" stroke="#0a0a0a" stroke-width="1" fill="none"/><path d="M921.4,95.6 H931 L931.8,97.7 H920.6Z" fill="#0000d8"/><path d="M946.54,80.36 A6.6,6.6 0 1 1 955.84,89.66" fill="none" stroke="#3a6a92" stroke-width="3.6"/><path d="M942.80,76.20 V84.20 H951.00Z" fill="#3a6a92"/><line x1="952.11" y1="90.71" x2="958.05" y2="96.65" stroke="#c08a58" stroke-width="2.6" stroke-linecap="round"/><line x1="952.11" y1="90.71" x2="958.05" y2="96.65" stroke="#8a5a30" stroke-width="0.6"/><circle cx="949" cy="87.6" r="4.4" fill="#e8e4e4" stroke="#8a9298" stroke-width="1.6"/><path d="M946.58,87.16 A2.64,2.64 0 0 1 949.44,84.96" fill="none" stroke="#fff" stroke-width="1"/><path d="M977.46,80.36 A6.6,6.6 0 1 0 968.16,89.66" fill="none" stroke="#3a6a92" stroke-width="3.6"/><path d="M981.20,76.20 V84.20 H973.00Z" fill="#3a6a92"/><line x1="972" y1="90.8" x2="965.8" y2="97" stroke="#c08a58" stroke-width="2.6" stroke-linecap="round"/><circle cx="975.2" cy="87.6" r="4.4" fill="#e8e4e4" stroke="#8a9298" stroke-width="1.6"/><path d="M998.1,75.8 L1002.3,79.4 H993.9Z M998.1,98 L1002.3,94.4 H993.9Z M986.9,87 L990.4,82.8 V91.2Z M1009.2,87 L1005.7,82.8 V91.2Z" fill="#3e5e7c"/><line x1="1002.06" y1="90.96" x2="1007.43" y2="96.33" stroke="#c08a58" stroke-width="2.6" stroke-linecap="round"/><line x1="1002.06" y1="90.96" x2="1007.43" y2="96.33" stroke="#8a5a30" stroke-width="0.6"/><circle cx="998.1" cy="87" r="5.6" fill="#eaeaec" stroke="#6e6e72" stroke-width="1.6"/><path d="M995.02,86.44 A3.36,3.36 0 0 1 998.66,83.64" fill="none" stroke="#fff" stroke-width="1"/><path d="M1012.2,78.2 H1023 L1029.6,84 V91.8 H1012.2Z" fill="#f4f4fc" stroke="#3a3a9a" stroke-width="1.5"/><path d="M1023,78.2 V84 H1029.6" fill="#fff" stroke="#3a3a9a" stroke-width="1"/><line x1="1024.55" y1="90.05" x2="1030.35" y2="95.85" stroke="#c8a860" stroke-width="2.6" stroke-linecap="round"/><line x1="1024.55" y1="90.05" x2="1030.35" y2="95.85" stroke="#8a5a30" stroke-width="0.6"/><circle cx="1021.3" cy="86.8" r="4.6" fill="#e6eae6" stroke="#7e868e" stroke-width="1.6"/><path d="M1018.77,86.34 A2.76,2.76 0 0 1 1021.76,84.04" fill="none" stroke="#fff" stroke-width="1"/><rect x="1038" y="78.2" width="16.4" height="5.2" fill="#b8ecec" stroke="#88b4bc" stroke-width="0.8"/><path d="M1038,80.6 H1036.6 V87.4 H1046.8 V90" fill="none" stroke="#8a8aa8" stroke-width="1.4"/><rect x="1045.8" y="89.6" width="2" height="8" fill="#7a4838"/><path d="M1059.4,80.6 L1070.6,76.2 L1080.4,80 L1069.4,85.2Z" fill="#b0b0a4"/><path d="M1059.4,80.6 L1069.4,85.2 V97.6 L1059.4,92.4Z" fill="#a2a29a"/><path d="M1069.4,85.2 L1080.4,80 V92 L1069.4,97.6Z" fill="#868678"/><ellipse cx="1069.6" cy="81.4" rx="4.6" ry="2.4" fill="#e8e800"/><path d="M1065,82.5 L1069.4,85.2 L1074,82.5 L1073,90 L1069.4,92 L1066,90Z" fill="#c8c820" opacity="0.45"/><path d="M1083,84.2 h7 l-3.5,3.8Z" fill="#000"/><g stroke="#0a0a0a" stroke-width="0.9" fill="none"><path d="M1097.2,76 L1118.2,97 M1097.2,84 L1110.2,97 M1097.2,92 L1102.2,97 M1105.2,76 L1118.2,89 M1113.2,76 L1118.2,81 M1118.2,76 L1097.2,97 M1110.2,76 L1097.2,89 M1102.2,76 L1097.2,81 M1118.2,84 L1105.2,97 M1118.2,92 L1113.2,97"/></g><rect x="1098.9" y="77.7" width="2.2" height="2.2" fill="#000"/><rect x="1106.9" y="77.7" width="2.2" height="2.2" fill="#000"/><rect x="1114.9" y="77.7" width="2.2" height="2.2" fill="#000"/><rect x="1102.9" y="81.7" width="2.2" height="2.2" fill="#000"/><rect x="1110.9" y="81.7" width="2.2" height="2.2" fill="#000"/><rect x="1098.9" y="85.7" width="2.2" height="2.2" fill="#000"/><rect x="1106.9" y="85.7" width="2.2" height="2.2" fill="#000"/><rect x="1114.9" y="85.7" width="2.2" height="2.2" fill="#000"/><rect x="1102.9" y="89.7" width="2.2" height="2.2" fill="#000"/><rect x="1110.9" y="89.7" width="2.2" height="2.2" fill="#000"/><rect x="1098.9" y="93.7" width="2.2" height="2.2" fill="#000"/><rect x="1106.9" y="93.7" width="2.2" height="2.2" fill="#000"/><rect x="1114.9" y="93.7" width="2.2" height="2.2" fill="#000"/><circle cx="1132" cy="86.9" r="8.8" fill="url(#gsph)"/><path d="M1144.8,84 h7.2 l-3.6,4Z" fill="#8c8c8c"/><polygon points="1161.20,81.20 1162.20,84.02 1165.19,84.10 1162.82,85.93 1163.67,88.80 1161.20,87.10 1158.73,88.80 1159.58,85.93 1157.21,84.10 1160.20,84.02" fill="#8e8e8e"/><rect x="1198.5" y="76.5" width="15" height="9" fill="#e4e4e4" stroke="#b4b4b4" stroke-width="1"/><rect x="1198.5" y="87.5" width="15" height="9" fill="#e4e4e4" stroke="#b4b4b4" stroke-width="1"/><path d="M1203,82 L1205.6,79.3 L1208.2,82Z M1203,90.6 L1205.6,93.3 L1208.2,90.6Z" fill="#000"/></svg>
<!-- icons_left -->
<svg style="left:0;top:0" width="500" height="1000" viewBox="0 0 500 1000"><defs><linearGradient id="gred" x1="0" y1="0" x2="0" y2="1"><stop offset="0" stop-color="#e8a8a0"/><stop offset="1" stop-color="#d83020"/></linearGradient><radialGradient id="ggry" cx="0.5" cy="0.45" r="0.6"><stop offset="0" stop-color="#8a8a8a"/><stop offset="0.7" stop-color="#d8d8d8"/><stop offset="1" stop-color="#f4f4f4"/></radialGradient></defs><rect x="8.6" y="93.5" width="20.6" height="20.6" rx="3" fill="#d8493a"/><rect x="9.8" y="94.4" width="18.2" height="3" rx="1.5" fill="#e8a098" opacity="0.7"/><rect x="10.8" y="95.6" width="16.2" height="15" rx="1.5" fill="#dcdada"/><ellipse cx="18.8" cy="101.6" rx="6" ry="4.8" fill="#b4b4b6" stroke="#8e8e92" stroke-width="1.4"/><ellipse cx="19.6" cy="102.2" rx="3" ry="2.4" fill="#d8d8da"/><path d="M11,103 Q12,109.6 18,110 L26.8,110.4 L26.8,108.4 L17,107.8 Q13.4,106.6 12.4,101Z" fill="#fcfcfc"/><path d="M33,96.6 L35.6,95.2 L39.4,95.6 L43,97 V102.6 H33Z" fill="#f0d050"/><path d="M42.4,107.6 L45,106.2 L48.6,106.6 L52.2,108 V113.6 H42.4Z" fill="#f0c848"/><path d="M43.8,97.6 H48.8 V103.4" fill="none" stroke="#0606d0" stroke-width="1.7"/><path d="M45.8,102.6 H51.8 L48.8,106.2Z" fill="#0606d0"/><circle cx="66.9" cy="103.9" r="8.7" fill="none" stroke="#0a0a0a" stroke-width="1.2"/><path d="M64,101 H71.5" stroke="#88a0c8" stroke-width="1.4"/><path d="M61.4,101 L65.2,99.4 V102.6Z" fill="#000"/><rect x="70" y="108" width="5" height="5" fill="none" stroke="#c82838" stroke-width="1"/><path d="M72.5,106.4 V114.8 M68.4,110.5 H76.6" stroke="#c82838" stroke-width="0.8"/><polygon points="85.23,106.35 96.44,94.72 100.76,98.88 89.55,110.51" fill="#6a6a6a"/><polygon points="87.39,108.43 98.60,96.80 100.76,98.88 89.55,110.51" fill="#4a4a4a"/><polygon points="82.60,113.40 85.23,106.35 89.55,110.51" fill="#f0f0f0" stroke="#8a8a8a" stroke-width="0.4"/><polygon points="82.60,113.40 83.52,110.93 85.03,112.39" fill="#444"/><path d="M105.8,95.6 H113.4 L118,100.2 V112.2 H105.8Z" fill="#fff" stroke="#8e8e8e" stroke-width="0.9"/><path d="M113.4,95.6 V100.2 H118" fill="none" stroke="#8e8e8e" stroke-width="0.8"/><polygon points="114.32,105.23 121.01,98.27 124.19,101.33 117.49,108.28" fill="#6e6e6e"/><polygon points="115.91,106.75 122.60,99.80 124.19,101.33 117.49,108.28" fill="#505050"/><polygon points="112.40,110.40 114.32,105.23 117.49,108.28" fill="#e8e8e8" stroke="#8a8a8a" stroke-width="0.4"/><polygon points="112.40,110.40 113.07,108.59 114.18,109.66" fill="#444"/><text x="128.6" y="101.5" font-family="Liberation Sans,sans-serif" font-weight="bold" font-size="10.2" fill="#000" stroke="#000" stroke-width="0.5" textLength="8" lengthAdjust="spacingAndGlyphs">H</text><polygon points="132.05,106.37 144.81,93.61 149.19,97.99 136.43,110.75" fill="#4a4a4a"/><polygon points="134.24,108.56 147.00,95.80 149.19,97.99 136.43,110.75" fill="#2e2e2e"/><polygon points="129.20,113.60 132.05,106.37 136.43,110.75" fill="#f4f4f4" stroke="#8a8a8a" stroke-width="0.4"/><polygon points="129.20,113.60 130.20,111.07 131.73,112.60" fill="#222"/><rect x="153.6" y="94.8" width="18.8" height="18.4" fill="#fff" stroke="#585858" stroke-width="1.2"/><path d="M153.6,101.4 H172.4 M153.6,106.2 H172.4" stroke="#585858" stroke-width="1.1"/><path d="M154.4,100.2 L159.4,95.4 M158.8,100.8 L165,95.4 M164.6,100.8 L170.6,95.4 M170,100.8 L172,99 M154.4,111.6 L159.4,106.8 M158.8,112.6 L165,106.8 M164.6,112.6 L170.6,106.8 M170,112.6 L172,110.8" stroke="#7a7a7a" stroke-width="0.9" fill="none"/><path d="M178.4,95.2 V112.8 M194.6,95.2 V112.8" stroke="#585858" stroke-width="1.2"/><path d="M178.4,100.4 H182.6 M191,100.4 H194.6" stroke="#585858" stroke-width="1"/><path d="M181,95.8 L189,102 L185.6,102.6 L192.4,112.4 L190.4,112.4 L181.6,103.4 L184.8,102.6 L180.4,98Z" fill="#9a9a9a" stroke="#5a5a5a" stroke-width="0.5"/><path d="M201,103.9 H221" stroke="#6a6a6a" stroke-width="2.2" stroke-dasharray="2.6 1.3"/><path d="M210.9,94.4 V113.6" stroke="#6a6a6a" stroke-width="2.2" stroke-dasharray="2.6 1.3"/><path d="M225.2,100.2 H235 V108 H245" fill="none" stroke="#6a6a6a" stroke-width="2.2" stroke-dasharray="2.6 1.5"/><path d="M249.8,100.6 H262.6 V113.6 H249.8Z M255.8,94.6 H268.6 V107.6 H255.8Z M249.8,100.6 L255.8,94.6 M262.6,100.6 L268.6,94.6 M262.6,113.6 L268.6,107.6 M249.8,113.6 L255.8,107.6" fill="none" stroke="#666" stroke-width="0.95"/><rect x="272.4" y="99.8" width="16" height="7.8" rx="1" fill="#f8f8f8" stroke="#5e5e5e" stroke-width="1"/><path d="M273,102 H288 M273,105.4 H288" stroke="#5e5e5e" stroke-width="0.9"/><rect x="288.4" y="96.6" width="4.2" height="13.6" fill="#f8f8f8" stroke="#5e5e5e" stroke-width="1"/><path d="M288.4,99.6 H292.6 M288.4,107 H292.6" stroke="#5e5e5e" stroke-width="0.8"/><path d="M297.4,102.4 L306.6,93.4 L316.6,98.6 V109.6 L307.4,114.4 L297.4,109.6Z" fill="#f4f4f4" stroke="#2a2a2a" stroke-width="1" stroke-linejoin="round"/><path d="M303,96.8 L312.6,101.6 M297.4,105 L307,109.4 M307.4,114.4 V109 Q307.6,103.6 312.6,101.6 L316.6,98.6" fill="none" stroke="#2a2a2a" stroke-width="0.95"/><rect x="321.4" y="94.5" width="4.6" height="4.6" fill="#e49448" stroke="#5a6a8c" stroke-width="0.8"/><rect x="328.4" y="95.9" width="2" height="2" fill="#000"/><rect x="333.2" y="95.9" width="2" height="2" fill="#000"/><rect x="337.4" y="95.9" width="4" height="2" fill="#000"/><rect x="321.4" y="101.8" width="4.6" height="4.6" fill="#e49448" stroke="#5a6a8c" stroke-width="0.8"/><rect x="328.4" y="103.2" width="2" height="2" fill="#000"/><rect x="333.2" y="103.2" width="2" height="2" fill="#000"/><rect x="337.4" y="103.2" width="4" height="2" fill="#000"/><rect x="321.4" y="109.3" width="4.6" height="4.6" fill="#e49448" stroke="#5a6a8c" stroke-width="0.8"/><rect x="328.4" y="110.7" width="2" height="2" fill="#000"/><rect x="333.2" y="110.7" width="2" height="2" fill="#000"/><rect x="337.4" y="110.7" width="4" height="2" fill="#000"/><path d="M477.6,82.5 L481.2,79.8 V85.2Z" fill="#000"/><path d="M488.6,80.2 L494,85 M494,80.2 L488.6,85" stroke="#000" stroke-width="1.6" fill="none"/><path d="M19,128 L23.6,125.2 L28.4,130 L26.8,131 L29.6,138.4 L27,140.4 L22.4,133.6 L21,134.6Z" fill="#e8e820" stroke="#8a8a20" stroke-width="0.6"/><path d="M25.6,136.6 L29.8,138.8 L27.4,140.8Z" fill="#1a1a1a"/><circle cx="19" cy="133.4" r="3.6" fill="#e8ecf0" fill-opacity="0.9" stroke="#9a9ea4" stroke-width="1"/><g transform="translate(81 125.7)"><path d="M0,6.6 L7.4,3.4 L12.4,5.6 L5,9.6Z" fill="#f09030"/><path d="M0,4.8 L7.4,1.6 L12.4,3.8 L5,7.8Z" fill="#fff"/><path d="M1.6,3 L7.6,0 L12.4,2.2 L6.2,5.6Z" fill="#1f5cb8"/></g><g transform="translate(33.8 146.8) scale(0.66)"><path d="M0,15.6 L12.7,8.6 L20.9,13.8 L20.9,15.6 L8.7,21.8 L0,17.2Z" fill="#f0693a"/><path d="M0,10.4 L12.7,3.4 L20.9,8.6 L20.9,10.2 L8.7,16.6 L0,12Z" fill="#f4f4f8"/><path d="M0,7 L12.7,0 L20.9,5.2 L20.9,6.8 L8.7,13.6 L0,8.6Z" fill="#0f4fa8"/><path d="M0,7 L12.7,0 L20.9,5.2 L8.7,12.3Z" fill="#1862c4"/></g><rect x="178" y="489" width="16" height="16" fill="#000"/><rect x="212" y="495" width="16" height="4" fill="#000"/><path d="M282.6,497.3 L286.6,501.2 L295.6,491.8" fill="none" stroke="#26c434" stroke-width="2.2"/><path d="M316.2,498.1 Q323.2,489.6 330.2,498.1" fill="none" stroke="#3a3638" stroke-width="1.6"/><path d="M317.59999999999997,499.0 Q323.2,502.8 328.8,499.0" fill="none" stroke="#b8bcc4" stroke-width="0.8"/><circle cx="323.2" cy="498.20000000000005" r="2.7" fill="#5a86b8"/><circle cx="323.2" cy="498.20000000000005" r="1.2" fill="#1a2a44"/><rect x="178" y="508" width="16" height="16" fill="#000"/><rect x="212" y="514" width="16" height="4" fill="#000"/><path d="M282.6,516.3 L286.6,520.2 L295.6,510.8" fill="none" stroke="#26c434" stroke-width="2.2"/><path d="M316.2,517.1 Q323.2,508.6 330.2,517.1" fill="none" stroke="#3a3638" stroke-width="1.6"/><path d="M317.59999999999997,518.0 Q323.2,521.8000000000001 328.8,518.0" fill="none" stroke="#b8bcc4" stroke-width="0.8"/><circle cx="323.2" cy="517.2" r="2.7" fill="#5a86b8"/><circle cx="323.2" cy="517.2" r="1.2" fill="#1a2a44"/><rect x="178" y="527" width="16" height="16" fill="#000"/><rect x="212" y="533" width="16" height="4" fill="#000"/><path d="M282.6,535.3 L286.6,539.2 L295.6,529.8" fill="none" stroke="#26c434" stroke-width="2.2"/><path d="M316.2,536.1 Q323.2,527.6 330.2,536.1" fill="none" stroke="#3a3638" stroke-width="1.6"/><path d="M317.59999999999997,537.0 Q323.2,540.8000000000001 328.8,537.0" fill="none" stroke="#b8bcc4" stroke-width="0.8"/><circle cx="323.2" cy="536.2" r="2.7" fill="#5a86b8"/><circle cx="323.2" cy="536.2" r="1.2" fill="#1a2a44"/><rect x="178" y="546" width="16" height="16" fill="#000"/><rect x="212" y="552" width="16" height="4" fill="#000"/><path d="M282.6,554.3 L286.6,558.2 L295.6,548.8" fill="none" stroke="#26c434" stroke-width="2.2"/><path d="M316.2,555.1 Q323.2,546.6 330.2,555.1" fill="none" stroke="#3a3638" stroke-width="1.6"/><path d="M317.59999999999997,556.0 Q323.2,559.8000000000001 328.8,556.0" fill="none" stroke="#b8bcc4" stroke-width="0.8"/><circle cx="323.2" cy="555.2" r="2.7" fill="#5a86b8"/><circle cx="323.2" cy="555.2" r="1.2" fill="#1a2a44"/><rect x="178" y="565" width="16" height="16" fill="#000"/><rect x="212" y="571" width="16" height="4" fill="#000"/><path d="M282.6,573.3 L286.6,577.2 L295.6,567.8" fill="none" stroke="#26c434" stroke-width="2.2"/><path d="M316.2,574.1 Q323.2,565.6 330.2,574.1" fill="none" stroke="#3a3638" stroke-width="1.6"/><path d="M317.59999999999997,575.0 Q323.2,578.8000000000001 328.8,575.0" fill="none" stroke="#b8bcc4" stroke-width="0.8"/><circle cx="323.2" cy="574.2" r="2.7" fill="#5a86b8"/><circle cx="323.2" cy="574.2" r="1.2" fill="#1a2a44"/><rect x="178" y="584" width="16" height="16" fill="#000"/><rect x="212" y="590" width="16" height="4" fill="#000"/><path d="M282.6,592.3 L286.6,596.2 L295.6,586.8" fill="none" stroke="#26c434" stroke-width="2.2"/><path d="M316.2,593.1 Q323.2,584.6 330.2,593.1" fill="none" stroke="#3a3638" stroke-width="1.6"/><path d="M317.59999999999997,594.0 Q323.2,597.8000000000001 328.8,594.0" fill="none" stroke="#b8bcc4" stroke-width="0.8"/><circle cx="323.2" cy="593.2" r="2.7" fill="#5a86b8"/><circle cx="323.2" cy="593.2" r="1.2" fill="#1a2a44"/><rect x="178" y="603" width="16" height="16" fill="#000"/><rect x="212" y="609" width="16" height="4" fill="#000"/><path d="M282.6,611.3 L286.6,615.2 L295.6,605.8" fill="none" stroke="#26c434" stroke-width="2.2"/><path d="M316.2,612.1 Q323.2,603.6 330.2,612.1" fill="none" stroke="#3a3638" stroke-width="1.6"/><path d="M317.59999999999997,613.0 Q323.2,616.8000000000001 328.8,613.0" fill="none" stroke="#b8bcc4" stroke-width="0.8"/><circle cx="323.2" cy="612.2" r="2.7" fill="#5a86b8"/><circle cx="323.2" cy="612.2" r="1.2" fill="#1a2a44"/><rect x="178" y="622" width="16" height="16" fill="#000"/><rect x="212" y="628" width="16" height="4" fill="#000"/><path d="M282.6,630.3 L286.6,634.2 L295.6,624.8" fill="none" stroke="#26c434" stroke-width="2.2"/><path d="M316.2,631.1 Q323.2,622.6 330.2,631.1" fill="none" stroke="#3a3638" stroke-width="1.6"/><path d="M317.59999999999997,632.0 Q323.2,635.8000000000001 328.8,632.0" fill="none" stroke="#b8bcc4" stroke-width="0.8"/><circle cx="323.2" cy="631.2" r="2.7" fill="#5a86b8"/><circle cx="323.2" cy="631.2" r="1.2" fill="#1a2a44"/><rect x="178" y="641" width="16" height="16" fill="#000"/><rect x="212" y="647" width="16" height="4" fill="#000"/><path d="M282.6,649.3 L286.6,653.2 L295.6,643.8" fill="none" stroke="#26c434" stroke-width="2.2"/><path d="M316.2,650.1 Q323.2,641.6 330.2,650.1" fill="none" stroke="#3a3638" stroke-width="1.6"/><path d="M317.59999999999997,651.0 Q323.2,654.8000000000001 328.8,651.0" fill="none" stroke="#b8bcc4" stroke-width="0.8"/><circle cx="323.2" cy="650.2" r="2.7" fill="#5a86b8"/><circle cx="323.2" cy="650.2" r="1.2" fill="#1a2a44"/><rect x="178" y="660" width="16" height="16" fill="#b010b8"/><rect x="212" y="666" width="16" height="4" fill="#000"/><path d="M282.6,668.3 L286.6,672.2 L295.6,662.8" fill="none" stroke="#26c434" stroke-width="2.2"/><path d="M316.2,669.1 Q323.2,660.6 330.2,669.1" fill="none" stroke="#3a3638" stroke-width="1.6"/><path d="M317.59999999999997,670.0 Q323.2,673.8000000000001 328.8,670.0" fill="none" stroke="#b8bcc4" stroke-width="0.8"/><circle cx="323.2" cy="669.2" r="2.7" fill="#5a86b8"/><circle cx="323.2" cy="669.2" r="1.2" fill="#1a2a44"/><rect x="178" y="679" width="16" height="16" fill="#10f810"/><rect x="212" y="685" width="16" height="4" fill="#000"/><path d="M283.2,680.8 L294.8,692.8 M294.8,680.8 L283.2,692.8" fill="none" stroke="#e01420" stroke-width="2.7"/><path d="M316.2,688.1 Q323.2,679.6 330.2,688.1" fill="none" stroke="#3a3638" stroke-width="1.6"/><path d="M317.59999999999997,689.0 Q323.2,692.8000000000001 328.8,689.0" fill="none" stroke="#b8bcc4" stroke-width="0.8"/><circle cx="323.2" cy="688.2" r="2.7" fill="#5a86b8"/><circle cx="323.2" cy="688.2" r="1.2" fill="#1a2a44"/><path d="M317.4,680.8 L329.0,692.8 M329.0,680.8 L317.4,692.8" fill="none" stroke="#e01420" stroke-width="2.7"/><rect x="178" y="698" width="16" height="16" fill="#0c00b4"/><rect x="212" y="704" width="16" height="4" fill="#000"/><path d="M283.2,699.8 L294.8,711.8 M294.8,699.8 L283.2,711.8" fill="none" stroke="#e01420" stroke-width="2.7"/><path d="M316.2,707.1 Q323.2,698.6 330.2,707.1" fill="none" stroke="#3a3638" stroke-width="1.6"/><path d="M317.59999999999997,708.0 Q323.2,711.8000000000001 328.8,708.0" fill="none" stroke="#b8bcc4" stroke-width="0.8"/><circle cx="323.2" cy="707.2" r="2.7" fill="#5a86b8"/><circle cx="323.2" cy="707.2" r="1.2" fill="#1a2a44"/><path d="M317.4,699.8 L329.0,711.8 M329.0,699.8 L317.4,711.8" fill="none" stroke="#e01420" stroke-width="2.7"/><rect x="178" y="717" width="16" height="16" fill="#0c00b4"/><rect x="212" y="723" width="16" height="4" fill="#000"/><path d="M283.2,718.8 L294.8,730.8 M294.8,718.8 L283.2,730.8" fill="none" stroke="#e01420" stroke-width="2.7"/><path d="M316.2,726.1 Q323.2,717.6 330.2,726.1" fill="none" stroke="#3a3638" stroke-width="1.6"/><path d="M317.59999999999997,727.0 Q323.2,730.8000000000001 328.8,727.0" fill="none" stroke="#b8bcc4" stroke-width="0.8"/><circle cx="323.2" cy="726.2" r="2.7" fill="#5a86b8"/><circle cx="323.2" cy="726.2" r="1.2" fill="#1a2a44"/><path d="M317.4,718.8 L329.0,730.8 M329.0,718.8 L317.4,730.8" fill="none" stroke="#e01420" stroke-width="2.7"/><rect x="178" y="736" width="16" height="16" fill="#b010b8"/><rect x="212" y="742" width="16" height="4" fill="#000"/><path d="M283.2,737.8 L294.8,749.8 M294.8,737.8 L283.2,749.8" fill="none" stroke="#e01420" stroke-width="2.7"/><path d="M316.2,745.1 Q323.2,736.6 330.2,745.1" fill="none" stroke="#3a3638" stroke-width="1.6"/><path d="M317.59999999999997,746.0 Q323.2,749.8000000000001 328.8,746.0" fill="none" stroke="#b8bcc4" stroke-width="0.8"/><circle cx="323.2" cy="745.2" r="2.7" fill="#5a86b8"/><circle cx="323.2" cy="745.2" r="1.2" fill="#1a2a44"/><path d="M317.4,737.8 L329.0,749.8 M329.0,737.8 L317.4,749.8" fill="none" stroke="#e01420" stroke-width="2.7"/><rect x="178" y="755" width="16" height="16" fill="#0000f8"/><rect x="212" y="761" width="5" height="4" fill="#000"/><rect x="218.2" y="761.4" width="3.2" height="3.2" fill="#000"/><rect x="222.6" y="761" width="5.4" height="4" fill="#000"/><path d="M282.6,763.3 L286.6,767.2 L295.6,757.8" fill="none" stroke="#26c434" stroke-width="2.2"/><path d="M316.2,764.1 Q323.2,755.6 330.2,764.1" fill="none" stroke="#3a3638" stroke-width="1.6"/><path d="M317.59999999999997,765.0 Q323.2,768.8000000000001 328.8,765.0" fill="none" stroke="#b8bcc4" stroke-width="0.8"/><circle cx="323.2" cy="764.2" r="2.7" fill="#5a86b8"/><circle cx="323.2" cy="764.2" r="1.2" fill="#1a2a44"/><rect x="178" y="774" width="16" height="4" fill="#000"/><rect x="16.5" y="775.3" width="13" height="4" fill="#f4f4f4" stroke="#8a8a8a" stroke-width="0.9"/><path d="M292,777.6 L295.4,774.4" stroke="#26c434" stroke-width="1.6"/><path d="M319.6,777.8 Q323.2,774.2 326.8,777.8" fill="none" stroke="#8a8a8a" stroke-width="1"/><g transform="translate(16.2 489.8) scale(0.66)"><path d="M0,15.6 L12.7,8.6 L20.9,13.8 L20.9,15.6 L8.7,21.8 L0,17.2Z" fill="#f0693a"/><path d="M0,10.4 L12.7,3.4 L20.9,8.6 L20.9,10.2 L8.7,16.6 L0,12Z" fill="#f4f4f8"/><path d="M0,7 L12.7,0 L20.9,5.2 L20.9,6.8 L8.7,13.6 L0,8.6Z" fill="#0f4fa8"/><path d="M0,7 L12.7,0 L20.9,5.2 L8.7,12.3Z" fill="#1862c4"/></g><g transform="translate(16.2 508.8) scale(0.66)"><path d="M0,15.6 L12.7,8.6 L20.9,13.8 L20.9,15.6 L8.7,21.8 L0,17.2Z" fill="#f0693a"/><path d="M0,10.4 L12.7,3.4 L20.9,8.6 L20.9,10.2 L8.7,16.6 L0,12Z" fill="#f4f4f8"/><path d="M0,7 L12.7,0 L20.9,5.2 L20.9,6.8 L8.7,13.6 L0,8.6Z" fill="#0f4fa8"/><path d="M0,7 L12.7,0 L20.9,5.2 L8.7,12.3Z" fill="#1862c4"/></g><g transform="translate(16.2 527.8) scale(0.66)"><path d="M0,15.6 L12.7,8.6 L20.9,13.8 L20.9,15.6 L8.7,21.8 L0,17.2Z" fill="#f0693a"/><path d="M0,10.4 L12.7,3.4 L20.9,8.6 L20.9,10.2 L8.7,16.6 L0,12Z" fill="#f4f4f8"/><path d="M0,7 L12.7,0 L20.9,5.2 L20.9,6.8 L8.7,13.6 L0,8.6Z" fill="#0f4fa8"/><path d="M0,7 L12.7,0 L20.9,5.2 L8.7,12.3Z" fill="#1862c4"/></g><g transform="translate(16.2 546.8) scale(0.66)"><path d="M0,15.6 L12.7,8.6 L20.9,13.8 L20.9,15.6 L8.7,21.8 L0,17.2Z" fill="#f0693a"/><path d="M0,10.4 L12.7,3.4 L20.9,8.6 L20.9,10.2 L8.7,16.6 L0,12Z" fill="#f4f4f8"/><path d="M0,7 L12.7,0 L20.9,5.2 L20.9,6.8 L8.7,13.6 L0,8.6Z" fill="#0f4fa8"/><path d="M0,7 L12.7,0 L20.9,5.2 L8.7,12.3Z" fill="#1862c4"/></g><g transform="translate(16.2 565.8) scale(0.66)"><path d="M0,15.6 L12.7,8.6 L20.9,13.8 L20.9,15.6 L8.7,21.8 L0,17.2Z" fill="#f0693a"/><path d="M0,10.4 L12.7,3.4 L20.9,8.6 L20.9,10.2 L8.7,16.6 L0,12Z" fill="#f4f4f8"/><path d="M0,7 L12.7,0 L20.9,5.2 L20.9,6.8 L8.7,13.6 L0,8.6Z" fill="#0f4fa8"/><path d="M0,7 L12.7,0 L20.9,5.2 L8.7,12.3Z" fill="#1862c4"/></g><g transform="translate(16.2 584.8) scale(0.66)"><path d="M0,15.6 L12.7,8.6 L20.9,13.8 L20.9,15.6 L8.7,21.8 L0,17.2Z" fill="#f0693a"/><path d="M0,10.4 L12.7,3.4 L20.9,8.6 L20.9,10.2 L8.7,16.6 L0,12Z" fill="#f4f4f8"/><path d="M0,7 L12.7,0 L20.9,5.2 L20.9,6.8 L8.7,13.6 L0,8.6Z" fill="#0f4fa8"/><path d="M0,7 L12.7,0 L20.9,5.2 L8.7,12.3Z" fill="#1862c4"/></g><g transform="translate(16.2 641.8) scale(0.66)"><path d="M0,15.6 L12.7,8.6 L20.9,13.8 L20.9,15.6 L8.7,21.8 L0,17.2Z" fill="#f0693a"/><path d="M0,10.4 L12.7,3.4 L20.9,8.6 L20.9,10.2 L8.7,16.6 L0,12Z" fill="#f4f4f8"/><path d="M0,7 L12.7,0 L20.9,5.2 L20.9,6.8 L8.7,13.6 L0,8.6Z" fill="#0f4fa8"/><path d="M0,7 L12.7,0 L20.9,5.2 L8.7,12.3Z" fill="#1862c4"/></g><path d="M16.6,604.2 V617.8 M29.6,604.2 V617.8" stroke="#0a0a0a" stroke-width="1.2"/><path d="M16.6,607.8 H21 M26,607.8 H29.6" stroke="#0a0a0a" stroke-width="1"/><path d="M18.4,604.4 L25.4,609.4 L22.6,610 L27.6,617.6 L26,617.6 L19.4,610.8 L22,610 L18.2,606.2Z" fill="#f0f010" stroke="#a8a800" stroke-width="0.5"/><path d="M16.8,623 H22.6 L26.4,626.8 V636.6 H16.8Z" fill="#fff" stroke="#9c90dc" stroke-width="0.9"/><polygon points="24.14,629.29 27.68,624.93 30.32,627.07 26.78,631.43" fill="#2a6cdc"/><polygon points="23.00,633.40 24.14,629.29 26.78,631.43" fill="#e8f0ff" stroke="#8a8a8a" stroke-width="0.4"/><polygon points="23.00,633.40 23.40,631.96 24.32,632.71" fill="#2a4a9a"/><rect x="16.4" y="665" width="10.6" height="5" rx="2" fill="#a810a8"/><rect x="18" y="666.4" width="8" height="1.2" fill="#e070e0"/><rect x="26.6" y="662.4" width="3.6" height="10.4" fill="#0a0a0a"/><rect x="27.6" y="664.6" width="1.6" height="1.6" fill="#d8d8d8"/><rect x="27.6" y="669.2" width="1.6" height="1.6" fill="#d8d8d8"/><text x="15.8" y="686.4" font-family="Liberation Sans,sans-serif" font-weight="bold" font-size="7.4" fill="#000" textLength="5" lengthAdjust="spacingAndGlyphs">H</text><polygon points="18.11,688.96 27.21,680.16 29.99,683.04 20.90,691.84" fill="#1e9460"/><polygon points="19.51,690.40 28.60,681.60 29.99,683.04 20.90,691.84" fill="#14784a"/><polygon points="16.20,693.60 18.11,688.96 20.90,691.84" fill="#f4dcc8" stroke="#8a8a8a" stroke-width="0.4"/><polygon points="16.20,693.60 16.87,691.98 17.84,692.98" fill="#8a4a3a"/><path d="M17.5,701.5 V713 M28.5,701.5 V713" stroke="#0a0a0a" stroke-width="1.2" fill="none"/><path d="M15,705.2 H31" stroke="#28c038" stroke-width="1" fill="none"/><path d="M16,706.4 L19,704 M27,706.4 L30,704" stroke="#28c038" stroke-width="0.8" fill="none"/><text x="19.6" y="703.2" font-family="Liberation Sans,sans-serif" font-weight="bold" font-size="5.4" fill="#0a0a0a" textLength="7" lengthAdjust="spacingAndGlyphs">10</text><path d="M17.5,720.5 V732 M28.5,720.5 V732" stroke="#28c038" stroke-width="1.2" fill="none"/><path d="M15,724.2 H31" stroke="#0a0a0a" stroke-width="1" fill="none"/><path d="M16,725.4 L19,723 M27,725.4 L30,723" stroke="#0a0a0a" stroke-width="0.8" fill="none"/><text x="19.6" y="722.2" font-family="Liberation Sans,sans-serif" font-weight="bold" font-size="5.4" fill="#0a0a0a" textLength="7" lengthAdjust="spacingAndGlyphs">10</text><path d="M17.5,739.5 V751 M28.5,739.5 V751" stroke="#0a0a0a" stroke-width="1.2" fill="none"/><path d="M15,743.2 H31" stroke="#0a0a0a" stroke-width="1" fill="none"/><path d="M16,744.4 L19,742 M27,744.4 L30,742" stroke="#0a0a0a" stroke-width="0.8" fill="none"/><text x="19.6" y="741.2" font-family="Liberation Sans,sans-serif" font-weight="bold" font-size="5.4" fill="#28c038" textLength="7" lengthAdjust="spacingAndGlyphs">10</text><path d="M16,763 H30" stroke="#3434c4" stroke-width="1.6" stroke-dasharray="1.8 1.4"/><path d="M23,756 V770" stroke="#3434c4" stroke-width="1.6" stroke-dasharray="1.8 1.4"/><circle cx="23" cy="763" r="1.6" fill="#3434c4"/><path d="M90.6,466.4 L94.4,470 L98.2,466.4" fill="none" stroke="#a0a0a0" stroke-width="1"/><path d="M478.2,476 L481.6,472.6 L485,476" fill="none" stroke="#4a4a4a" stroke-width="2"/><path d="M478.2,767.4 L481.6,770.8 L485,767.4" fill="none" stroke="#4a4a4a" stroke-width="2"/><path d="M21,984.4 L17.6,987.8 L21,991.2" fill="none" stroke="#4a4a4a" stroke-width="2"/><path d="M480.2,984.4 L483.6,987.8 L480.2,991.2" fill="none" stroke="#4a4a4a" stroke-width="2"/><defs><linearGradient id="gfun" x1="0" y1="0" x2="1" y2="0"><stop offset="0" stop-color="#f8d820"/><stop offset="0.6" stop-color="#f0f000"/><stop offset="1" stop-color="#7a9a10"/></linearGradient></defs><path d="M13.4,789.2 L35,788.2 L24,800.4Z" fill="url(#gfun)"/><path d="M23.6,792 V799" stroke="#8a8a8a" stroke-width="2.2" stroke-linecap="round"/><path d="M28.6,797 L24.6,809.6" stroke="#1a1a1a" stroke-width="0.9" stroke-dasharray="1.6 1.4"/><path d="M13.4,791 L34.6,809 M34.8,789 L13.2,809.2" stroke="#f00c48" stroke-width="3" fill="none"/><path d="M43,796.4 Q43,794.4 48,794.4 Q53,794.4 53,796.4 V807.6 Q53,809.6 48,809.6 Q43,809.6 43,807.6Z" fill="#e4e4e4" stroke="#9a9a9a" stroke-width="0.8"/><ellipse cx="48" cy="796.4" rx="5" ry="1.8" fill="#f8f8f8" stroke="#9a9a9a" stroke-width="0.7"/><path d="M48.6,796.4 C48.6,791.6 51,789.4 55.2,790" fill="none" stroke="#2a6ab8" stroke-width="1.8"/><path d="M53.6,788 L57,790.4 L53.6,792.6Z" fill="#2a6ab8"/></svg>
<!-- icons_vert -->
<svg style="left:0;top:0" width="562" height="600" viewBox="0 0 562 600"><defs><radialGradient id="gbs" cx="0.3" cy="0.68" r="0.75"><stop offset="0" stop-color="#86c4ff"/><stop offset="0.3" stop-color="#1e60b0"/><stop offset="1" stop-color="#062a60"/></radialGradient><radialGradient id="ggs" cx="0.3" cy="0.7" r="0.8"><stop offset="0" stop-color="#80f8f0"/><stop offset="0.5" stop-color="#18a8a0"/><stop offset="1" stop-color="#0a5a58"/></radialGradient></defs><rect x="505" y="130" width="22" height="1" fill="#7a7a7a"/><rect x="505" y="158" width="22" height="1" fill="#7a7a7a"/><rect x="505" y="186" width="22" height="1" fill="#7a7a7a"/><rect x="505" y="214" width="22" height="1" fill="#7a7a7a"/><rect x="505" y="242" width="22" height="1" fill="#7a7a7a"/><rect x="505" y="270" width="22" height="1" fill="#7a7a7a"/><rect x="505" y="298" width="22" height="1" fill="#7a7a7a"/><rect x="505" y="326" width="22" height="1" fill="#7a7a7a"/><rect x="505" y="354" width="22" height="1" fill="#7a7a7a"/><rect x="505" y="382" width="22" height="1" fill="#7a7a7a"/><rect x="505" y="410" width="22" height="1" fill="#7a7a7a"/><rect x="505" y="438" width="22" height="1" fill="#7a7a7a"/><rect x="505" y="466" width="22" height="1" fill="#7a7a7a"/><rect x="505" y="494" width="22" height="1" fill="#7a7a7a"/><rect x="535" y="130" width="22" height="1" fill="#7a7a7a"/><rect x="535" y="158" width="22" height="1" fill="#7a7a7a"/><rect x="535" y="186" width="22" height="1" fill="#7a7a7a"/><rect x="535" y="358" width="22" height="1" fill="#7a7a7a"/><rect x="535" y="434" width="22" height="1" fill="#7a7a7a"/><rect x="535" y="486" width="22" height="1" fill="#7a7a7a"/><rect x="535" y="538" width="22" height="1" fill="#7a7a7a"/><path d="M506.4,107.4 L520,113 L516.6,115.6 L523,123.6 L520.6,125.6 L514.4,117.6 L512.2,120Z" fill="#1c1c3a" stroke="#0a0a1c" stroke-width="0.6" stroke-linejoin="round"/><path d="M508.6,110 L516,113.4 L513.6,115.4Z" fill="#4a4a78"/><path d="M537,108 L550.4,113.6 L547,116 L554.4,124 L552.4,125.6 L545.2,117.6 L542.6,120.2Z" fill="#fff" stroke="#8a8a8a" stroke-width="0.9" stroke-linejoin="round"/><circle cx="515.9" cy="144.8" r="10" fill="url(#gbs)"/><path d="M545.6,140.2 L549,136.4 L556.4,139.6 L556.6,145.6 L551.8,151.2 L546.6,149Z" fill="#f01c3c"/><path d="M551.8,151.2 L556.6,145.6 L556.6,147.6 L552,152.6Z" fill="#1a8a90"/><path d="M546.8,142.4 C541.6,141 538.4,144.6 539.2,149.6" fill="none" stroke="#2a2a9a" stroke-width="2"/><path d="M535.6,148 L542.6,149.2 L539.2,152.4Z" fill="#d02060"/><path d="M535.8,151 L540,150.4 L542.6,152.6 L539.8,154.8 L536,153.6Z" fill="#7adada"/><path d="M539.8,154.8 L542.6,152.6 L542.6,150.6 L540,152.2Z" fill="#2a8a8a"/><circle cx="515.9" cy="172.8" r="10.4" fill="url(#ggs)"/><path d="M510.6,166.4 A8.4,8.4 0 0 1 526,172 C526,175 524.4,177 522,177.6 L516,174.4 L512,169.6Z" fill="#f2f268"/><path d="M516.4,167.6 C520.6,168 522.4,172.4 520.4,176.4 C518.4,179.4 514.4,179 512,177.4" fill="none" stroke="#101010" stroke-width="2.2"/><path d="M520.4,174.6 L526,177.4 L521,178.8Z" fill="#101010"/><path d="M545.8,170 V177.2 M545.8,177.2 L539.6,180.6 M545.8,177.2 L552,180.6" stroke="#8aa0c0" stroke-width="2.2" fill="none"/><path d="M545.8,164.2 L548.4,170.8 H543.2Z" fill="#d81828"/><path d="M535.8,182.6 L539.8,176.8 L542.6,181.4Z" fill="#d81828"/><path d="M555.8,182.6 L551.8,176.8 L549,181.4Z" fill="#d81828"/><path d="M513.6,192.4 V197.6 M508,196.8 L514.2,199.4 L509.2,206 Q507,204 507.4,198.6Z M514.2,199.4 C517.4,200.8 519.4,196.4 523,195.4 C525,196.4 524.4,200.4 524.6,204.2" fill="none" stroke="#727272" stroke-width="2.2" stroke-linejoin="round"/><circle cx="513.6" cy="191.2" r="1.8" fill="#c81828"/><path d="M518.4,210.4 L521.4,207.8" stroke="#c06068" stroke-width="1.6"/><circle cx="518" cy="210.4" r="1.8" fill="#b81828"/><polygon points="535.20,196.46 539.15,196.46 538.58,193.20 544.60,200.00 538.58,206.80 539.15,203.54 535.20,203.54 535.95,200.00" fill="#6e9ace"/><polygon points="546.20,196.46 550.15,196.46 549.58,193.20 555.60,200.00 549.58,206.80 550.15,203.54 546.20,203.54 546.95,200.00" fill="#6e9ace"/><polygon points="535.20,220.66 539.15,220.66 538.58,217.40 544.60,224.20 538.58,231.00 539.15,227.74 535.20,227.74 535.95,224.20" fill="#1f4e86"/><polygon points="546.20,220.66 550.15,220.66 549.58,217.40 555.60,224.20 549.58,231.00 550.15,227.74 546.20,227.74 546.95,224.20" fill="#1f4e86"/><polygon points="536.00,242.06 539.95,242.06 539.38,238.80 545.40,245.60 539.38,252.40 539.95,249.14 536.00,249.14 536.75,245.60" fill="#d01a2c"/><polygon points="547.00,242.06 550.95,242.06 550.38,238.80 556.40,245.60 550.38,252.40 550.95,249.14 547.00,249.14 547.75,245.60" fill="#6e9ace"/><path d="M535.6,254.0 C535.6,258.0 539.6,258.0 540,255.0" fill="none" stroke="#8a8a8a" stroke-width="0.9"/><rect x="542.4" y="254.79999999999998" width="14.2" height="4" fill="#9aa0a6"/><polygon points="536.00,266.46 539.95,266.46 539.38,263.20 545.40,270.00 539.38,276.80 539.95,273.54 536.00,273.54 536.75,270.00" fill="#d01a2c"/><polygon points="547.00,266.46 550.95,266.46 550.38,263.20 556.40,270.00 550.38,276.80 550.95,273.54 547.00,273.54 547.75,270.00" fill="#1f4e86"/><path d="M535.6,278.4 C535.6,282.4 539.6,282.4 540,279.4" fill="none" stroke="#8a8a8a" stroke-width="0.9"/><rect x="542.4" y="279.2" width="14.2" height="4" fill="#9aa0a6"/><polygon points="509.71,229.87 522.35,217.50 527.25,222.50 514.60,234.87" fill="#f08a10"/><polygon points="512.15,232.37 524.80,220.00 527.25,222.50 514.60,234.87" fill="#c86400"/><polygon points="506.40,238.00 509.71,229.87 514.60,234.87" fill="#f8dcb8" stroke="#8a8a8a" stroke-width="0.4"/><polygon points="506.40,238.00 507.56,235.15 509.27,236.91" fill="#1a1a1a"/><path d="M507,233.6" fill="none"/><path d="M507.6,247.6 C510.4,246 513,247.4 514.2,249.4 L521.6,254 L520.4,255.8 L512.6,252 C510,252.6 508,250.4 507.6,247.6Z" fill="#c8c8c8" stroke="#8a8a8a" stroke-width="0.7"/><path d="M506.4,259.6 C508.4,256 513.6,256 515,259.8 L523.4,264.4 L522,266.6 L513.8,263 C510.6,265 507,263 506.4,259.6Z" fill="#d4d4d0" stroke="#8a8a8a" stroke-width="0.7"/><path d="M521,253.6 L525.8,248.6 L526.8,254.4Z M518.6,257.4 L524.6,257 L526.6,261.4Z" fill="#1a48d0"/><path d="M509.6,281.4 A7.6,7.6 0 0 1 523,279.6" fill="none" stroke="#88a8d2" stroke-width="3"/><path d="M506.6,276.4 L506.8,283.6 L513.4,282Z" fill="#88a8d2"/><path d="M522.6,288.4 A7.6,7.6 0 0 1 509.4,290.4" fill="none" stroke="#88a8d2" stroke-width="3"/><path d="M525.6,293.4 L525.4,286.2 L518.8,287.8Z" fill="#88a8d2"/><polygon points="511.20,282.92 514.81,282.92 514.30,281.00 519.80,285.00 514.30,289.00 514.81,287.08 511.20,287.08 511.89,285.00" fill="#2c4c8c"/><polygon points="509.02,314.83 521.53,302.33 526.47,307.27 513.97,319.78" fill="#1e9458"/><polygon points="511.49,317.31 524.00,304.80 526.47,307.27 513.97,319.78" fill="#147446"/><polygon points="505.80,323.00 509.02,314.83 513.97,319.78" fill="#f8dcc8" stroke="#8a8a8a" stroke-width="0.4"/><polygon points="505.80,323.00 506.93,320.14 508.66,321.87" fill="#1a1a1a"/><path d="M505,341 H527" stroke="#2222c4" stroke-width="2" stroke-dasharray="2 2"/><path d="M515.9,330 V352" stroke="#2222c4" stroke-width="2" stroke-dasharray="2 2"/><path d="M513.4,341 H518.4 M515.9,338.6 V343.4" stroke="#2222c4" stroke-width="2"/><circle cx="538.3" cy="297" r="2.7" fill="#283848"/><circle cx="537.5" cy="297.8" r="0.97" fill="#6a8eb8" opacity="0.6"/><circle cx="538.3" cy="313.4" r="2.7" fill="#283848"/><circle cx="537.5" cy="314.2" r="0.97" fill="#6a8eb8" opacity="0.6"/><circle cx="538.3" cy="321.1" r="2.7" fill="#283848"/><circle cx="537.5" cy="321.90000000000003" r="0.97" fill="#6a8eb8" opacity="0.6"/><circle cx="538.3" cy="328.6" r="2.7" fill="#283848"/><circle cx="537.5" cy="329.40000000000003" r="0.97" fill="#6a8eb8" opacity="0.6"/><circle cx="538.3" cy="337.4" r="2.7" fill="#283848"/><circle cx="537.5" cy="338.2" r="0.97" fill="#6a8eb8" opacity="0.6"/><circle cx="538.3" cy="352.6" r="2.7" fill="#283848"/><circle cx="537.5" cy="353.40000000000003" r="0.97" fill="#6a8eb8" opacity="0.6"/><circle cx="546" cy="297" r="2.7" fill="#283848"/><circle cx="545.2" cy="297.8" r="0.97" fill="#6a8eb8" opacity="0.6"/><circle cx="546" cy="313.4" r="2.7" fill="#283848"/><circle cx="545.2" cy="314.2" r="0.97" fill="#6a8eb8" opacity="0.6"/><circle cx="546" cy="321.1" r="2.7" fill="#283848"/><circle cx="545.2" cy="321.90000000000003" r="0.97" fill="#6a8eb8" opacity="0.6"/><circle cx="546" cy="328.6" r="2.7" fill="#283848"/><circle cx="545.2" cy="329.40000000000003" r="0.97" fill="#6a8eb8" opacity="0.6"/><circle cx="546" cy="337.4" r="2.7" fill="#283848"/><circle cx="545.2" cy="338.2" r="0.97" fill="#6a8eb8" opacity="0.6"/><circle cx="546" cy="352.6" r="2.7" fill="#283848"/><circle cx="545.2" cy="353.40000000000003" r="0.97" fill="#6a8eb8" opacity="0.6"/><circle cx="553.8" cy="297" r="2.7" fill="#283848"/><circle cx="553.0" cy="297.8" r="0.97" fill="#6a8eb8" opacity="0.6"/><circle cx="553.8" cy="313.4" r="2.7" fill="#283848"/><circle cx="553.0" cy="314.2" r="0.97" fill="#6a8eb8" opacity="0.6"/><circle cx="553.8" cy="321.1" r="2.7" fill="#283848"/><circle cx="553.0" cy="321.90000000000003" r="0.97" fill="#6a8eb8" opacity="0.6"/><circle cx="553.8" cy="328.6" r="2.7" fill="#283848"/><circle cx="553.0" cy="329.40000000000003" r="0.97" fill="#6a8eb8" opacity="0.6"/><circle cx="553.8" cy="337.4" r="2.7" fill="#283848"/><circle cx="553.0" cy="338.2" r="0.97" fill="#6a8eb8" opacity="0.6"/><circle cx="553.8" cy="352.6" r="2.7" fill="#283848"/><circle cx="553.0" cy="353.40000000000003" r="0.97" fill="#6a8eb8" opacity="0.6"/><circle cx="538.3" cy="345" r="2.7" fill="#283848"/><circle cx="537.5" cy="345.8" r="0.97" fill="#6a8eb8" opacity="0.6"/><circle cx="553.8" cy="345" r="2.7" fill="#283848"/><circle cx="553.0" cy="345.8" r="0.97" fill="#6a8eb8" opacity="0.6"/><path d="M506.6,359.6 V378 M525.4,359.6 V372.4" stroke="#2a2a2a" stroke-width="1.3"/><path d="M506.6,365.5 H512.4 M520,365.5 H525.4" stroke="#2a2a2a" stroke-width="1"/><path d="M510,359.6 L513.4,359 L520.4,366.4 L516.4,367.6 L521.6,377.4 L519.6,378 L510,368.4 L514.4,366.6 L509.4,361Z" fill="#f2f210" stroke="#b0b010" stroke-width="0.6"/><path d="M506.2,390.6 L510.2,386.8 L514.2,390.6 L510.2,394.6Z" fill="none" stroke="#0a0a0a" stroke-width="1"/><circle cx="510.2" cy="390" r="2.4" fill="#fff" stroke="#0a0a0a" stroke-width="1"/><path d="M512.6,391.6 C515,391 515.4,388.6 518,388.4 H524" fill="none" stroke="#0a0a0a" stroke-width="1"/><path d="M515.2,393.4 H520 L517.6,395.8Z" fill="#0a0a0a"/><path d="M517.6,395.6 V399.4" stroke="#0a0a0a" stroke-width="1"/><rect x="513.4" y="399.6" width="8.4" height="8" fill="#fff" stroke="#0a0a0a" stroke-width="1.1"/><text x="514.6" y="406.6" font-family="Liberation Sans,sans-serif" font-weight="bold" font-size="7.4" fill="#000" textLength="6" lengthAdjust="spacingAndGlyphs">A</text><text x="504.6" y="435.8" font-family="Liberation Sans,sans-serif" font-weight="bold" font-style="italic" font-size="19" fill="#0a0a78" stroke="#0a0a78" stroke-width="0.5" textLength="13" lengthAdjust="spacingAndGlyphs">A</text><text x="517.6" y="435.6" font-family="Liberation Sans,sans-serif" font-weight="bold" font-size="10.5" fill="#0a0a78" textLength="5.4" lengthAdjust="spacingAndGlyphs">b</text><polygon points="515.94,420.62 523.91,413.85 526.89,417.35 518.92,424.13" fill="#1a72d2"/><polygon points="517.43,422.37 525.40,415.60 526.89,417.35 518.92,424.13" fill="#1458a8"/><polygon points="513.40,425.80 515.94,420.62 518.92,424.13" fill="#f4dcc0" stroke="#8a8a8a" stroke-width="0.4"/><polygon points="513.40,425.80 514.29,423.99 515.33,425.21" fill="#5a3a2a"/><path d="M553.15,370.54 A7.2,7.2 0 0 0 539.96,368.80" fill="none" stroke="#6e9ace" stroke-width="3.6"/><polygon points="535.80,365.56 535.80,373.00 544.40,373.00" fill="#6e9ace"/><path d="M539.25,374.26 A7.2,7.2 0 0 0 552.44,376.00" fill="none" stroke="#6e9ace" stroke-width="3.6"/><polygon points="556.60,379.24 556.60,371.80 548.00,371.80" fill="#6e9ace"/><path d="M553.15,394.94 A7.2,7.2 0 0 0 539.96,393.20" fill="none" stroke="#1f4e86" stroke-width="3.6"/><polygon points="535.80,389.96 535.80,397.40 544.40,397.40" fill="#1f4e86"/><path d="M539.25,398.66 A7.2,7.2 0 0 0 552.44,400.40" fill="none" stroke="#6e9ace" stroke-width="3.6"/><polygon points="556.60,403.64 556.60,396.20 548.00,396.20" fill="#6e9ace"/><circle cx="546.1" cy="413.29999999999995" r="2.7" fill="#283848"/><circle cx="545.3000000000001" cy="414.09999999999997" r="0.97" fill="#6a8eb8" opacity="0.6"/><circle cx="553.114805770654" cy="417.34999999999997" r="2.7" fill="#283848"/><circle cx="552.3148057706541" cy="418.15" r="0.97" fill="#6a8eb8" opacity="0.6"/><circle cx="553.114805770654" cy="425.45" r="2.7" fill="#283848"/><circle cx="552.3148057706541" cy="426.25" r="0.97" fill="#6a8eb8" opacity="0.6"/><circle cx="546.1" cy="429.5" r="2.7" fill="#283848"/><circle cx="545.3000000000001" cy="430.3" r="0.97" fill="#6a8eb8" opacity="0.6"/><circle cx="539.085194229346" cy="425.45" r="2.7" fill="#283848"/><circle cx="538.2851942293461" cy="426.25" r="0.97" fill="#6a8eb8" opacity="0.6"/><circle cx="539.085194229346" cy="417.34999999999997" r="2.7" fill="#283848"/><circle cx="538.2851942293461" cy="418.15" r="0.97" fill="#6a8eb8" opacity="0.6"/><rect x="506" y="443" width="20.4" height="20.4" fill="#fff" stroke="#7a8cb4" stroke-width="1.3"/><path d="M506,450 H526.4 M506,455.4 H526.4" stroke="#7a8cb4" stroke-width="1.3"/><path d="M507,449 L512.6,443.8 M511.6,449.4 L517.8,443.8 M516.8,449.4 L523,443.8 M522,449.4 L526,445.8 M507,462.4 L512.6,456.4 M511.6,462.8 L517.8,456.4 M516.8,462.8 L523,456.4 M522,462.8 L526,459" stroke="#56627e" stroke-width="1" fill="none"/><circle cx="516.1" cy="480.9" r="10" fill="#0404d4"/><rect x="514" y="474.4" width="4.2" height="2.8" rx="0.8" fill="#fff"/><rect x="514" y="478.6" width="4.2" height="8.6" rx="0.6" fill="#fff"/><path d="M505.5,498.4 V519.5 H526.6" fill="none" stroke="#3a3a3a" stroke-width="1.1"/><path d="M507.6,510.6 L513.6,505.2 L519.2,511.4 L513.2,516.8 Q510,517.4 507.8,514.2 Q506.6,512.4 507.6,510.6Z" fill="#f01818"/><path d="M513.6,505.2 L520.6,499 L526.4,499 L526.6,504.8 L519.2,511.4Z" fill="#4a86c8"/><polygon points="546.00,438.80 554.20,446.24 549.35,445.64 549.35,450.80 542.65,450.80 542.65,445.64 537.80,446.24" fill="#6e9ace"/><polygon points="546.00,452.00 550.80,456.46 548.13,455.86 548.13,459.20 543.87,459.20 543.87,455.86 541.20,456.46" fill="#6e9ace"/><polygon points="546.00,462.80 554.20,470.24 549.35,469.64 549.35,474.80 542.65,474.80 542.65,469.64 537.80,470.24" fill="#1f4e86"/><polygon points="546.00,476.00 550.80,480.46 548.13,479.86 548.13,483.20 543.87,483.20 543.87,479.86 541.20,480.46" fill="#6e9ace"/><rect x="545" y="491" width="2" height="20.6" fill="#4a8a48"/><polygon points="535.00,497.32 538.78,497.32 538.24,494.30 544.00,500.60 538.24,506.90 538.78,503.88 535.00,503.88 535.72,500.60" fill="#6e9ace"/><polygon points="557.40,497.32 553.62,497.32 554.16,494.30 548.40,500.60 554.16,506.90 553.62,503.88 557.40,503.88 556.68,500.60" fill="#6e9ace"/><rect x="545" y="514.4" width="2" height="21.2" fill="#4a8a48"/><polygon points="535.00,521.32 538.78,521.32 538.24,518.30 544.00,524.60 538.24,530.90 538.78,527.88 535.00,527.88 535.72,524.60" fill="#6e9ace"/><polygon points="557.40,521.32 553.62,521.32 554.16,518.30 548.40,524.60 554.16,530.90 553.62,527.88 557.40,527.88 556.68,524.60" fill="#1f4e86"/><circle cx="546.2" cy="553" r="10.2" fill="none" stroke="#1e1e1e" stroke-width="1.3"/><circle cx="546.2" cy="542.8" r="1.5" fill="#b02050"/><circle cx="546.2" cy="563.2" r="1.5" fill="#b02050"/><circle cx="536" cy="553" r="1.5" fill="#b02050"/><circle cx="556.4" cy="553" r="1.5" fill="#b02050"/><circle cx="546.2" cy="553" r="1.5" fill="#b02050"/><path d="M523.2,122.2 L526,124.6 L523.2,127.0Z" fill="#000"/><path d="M523.2,150.2 L526,152.6 L523.2,155.0Z" fill="#000"/><path d="M523.2,178.2 L526,180.6 L523.2,183.0Z" fill="#000"/><path d="M523.2,206.2 L526,208.6 L523.2,211.0Z" fill="#000"/><path d="M523.2,234.2 L526,236.6 L523.2,239.0Z" fill="#000"/><path d="M523.2,262.2 L526,264.6 L523.2,267.0Z" fill="#000"/><path d="M523.2,290.2 L526,292.6 L523.2,295.0Z" fill="#000"/><path d="M523.2,318.2 L526,320.6 L523.2,323.0Z" fill="#000"/><path d="M523.2,346.2 L526,348.6 L523.2,351.0Z" fill="#000"/><path d="M523.2,374.2 L526,376.6 L523.2,379.0Z" fill="#000"/><path d="M523.2,402.2 L526,404.6 L523.2,407.0Z" fill="#000"/><path d="M523.2,430.2 L526,432.6 L523.2,435.0Z" fill="#000"/><path d="M523.2,458.2 L526,460.6 L523.2,463.0Z" fill="#000"/><path d="M523.2,486.2 L526,488.6 L523.2,491.0Z" fill="#000"/></svg>
<!-- status -->
<div style="left:1439px;top:163px;width:189px;height:257px;background:#f0f0f0;box-shadow:0 1px 7px 1px rgba(60,110,120,0.42);"></div>
<div style="left:1439px;top:163px;width:189px;height:31px;background:#fff;"></div>
<div style="left:1608px;top:171px;width:19px;height:19px;background:#e4e4e4;"></div>
<div style="left:1616px;top:178px;width:4px;height:2px;background:#f0f0f0;"></div>
<div style="left:1616px;top:181px;width:5px;height:2px;background:#f2f2f2;"></div>
<span class="t" style="left:1447.2px;top:171px;color:#8c8c8c;transform:scaleX(0.9109);transform-origin:0 0;">Status</span>
<div style="left:1533px;top:194px;width:1px;height:226px;background:#fafafa;"></div>
<div style="left:1534px;top:194px;width:2px;height:226px;background:#6e6e6e;"></div>
<div style="left:1545px;top:194px;width:83px;height:20px;background:#fff;border:1px solid #7a7a7a;box-sizing:border-box;"></div>
<div style="left:1545px;top:214px;width:83px;height:20px;background:#fff;border:1px solid #7a7a7a;box-sizing:border-box;"></div>
<div style="left:1545px;top:235px;width:83px;height:20px;background:#fff;border:1px solid #7a7a7a;box-sizing:border-box;"></div>
<div style="left:1545px;top:255px;width:83px;height:20px;background:#fff;border:1px solid #7a7a7a;box-sizing:border-box;"></div>
<div style="left:1545px;top:275px;width:83px;height:20px;background:#fff;border:1px solid #7a7a7a;box-sizing:border-box;"></div>
<div style="left:1545px;top:296px;width:83px;height:20px;background:#fff;border:1px solid #7a7a7a;box-sizing:border-box;"></div>
<div style="left:1545px;top:316px;width:83px;height:20px;background:#fff;border:1px solid #7a7a7a;box-sizing:border-box;"></div>
<div style="left:1545px;top:336px;width:83px;height:20px;background:#fff;border:1px solid #7a7a7a;box-sizing:border-box;"></div>
<div style="left:1545px;top:356px;width:83px;height:20px;background:#fff;border:1px solid #7a7a7a;box-sizing:border-box;"></div>
<div style="left:1545px;top:377px;width:83px;height:20px;background:#fff;border:1px solid #7a7a7a;box-sizing:border-box;"></div>
<!-- misc -->
<svg style="left:0;top:0" width="1920" height="1040" viewBox="0 0 1920 1040"><g transform="translate(1.9 6.8)"><path d="M0.2,4.6 C0.8,1.6 5.6,0.2 10.6,0.1 C13.8,0.1 16,1.4 16.3,3.3 C15,2.1 13.4,1.8 11.8,2.4 C9.4,3.3 8.4,5.4 6.6,7.2 C5.4,8.4 3,8.3 1.5,7.3 C0.4,6.6 0,5.6 0.2,4.6Z" fill="#f40a0a"/></g><g transform="translate(6.9 27.9)"><path d="M0.2,4.6 C0.8,1.6 5.6,0.2 10.6,0.1 C13.8,0.1 16,1.4 16.3,3.3 C15,2.1 13.4,1.8 11.8,2.4 C9.4,3.3 8.4,5.4 6.6,7.2 C5.4,8.4 3,8.3 1.5,7.3 C0.4,6.6 0,5.6 0.2,4.6Z" fill="#f40a0a"/></g><path d="M1799,10.5 H1809" stroke="#000" stroke-width="1"/><path d="M1844.5,7.5 H1852 V14.5 H1844.5Z M1846.5,7.5 V5.5 H1854 V12.5 H1852" fill="none" stroke="#000" stroke-width="1"/><path d="M1890,5 L1900,15 M1900,5 L1890,15" stroke="#000" stroke-width="1.1"/><rect x="1863.5" y="24.5" width="17" height="17" fill="#fff" stroke="#e6e6e6" stroke-width="1"/><rect x="1882.5" y="24.5" width="17" height="17" fill="#fff" stroke="#e6e6e6" stroke-width="1"/><rect x="1901.5" y="24.5" width="17" height="17" fill="#fff" stroke="#e6e6e6" stroke-width="1"/><rect x="1868" y="35" width="6.4" height="2" fill="#6e7780"/><path d="M1889.6,30.4 H1895.4 V34" fill="none" stroke="#6e7780" stroke-width="1.6"/><rect x="1887.4" y="32.6" width="5.6" height="4" fill="#fff" stroke="#6e7780" stroke-width="1.4"/><path d="M1907.4,30.4 L1913.4,36.6 M1913.4,30.4 L1907.4,36.6" stroke="#6e7780" stroke-width="2"/><path d="M1908.2,114.4 L1911.6,111 L1915,114.4" fill="none" stroke="#4a4a4a" stroke-width="2"/><path d="M1908.2,981 L1911.6,984.4 L1915,981" fill="none" stroke="#4a4a4a" stroke-width="2"/><path d="M572,996 L568.6,999.4 L572,1002.8" fill="none" stroke="#4a4a4a" stroke-width="2"/><path d="M1893,996 L1896.4,999.4 L1893,1002.8" fill="none" stroke="#4a4a4a" stroke-width="2"/><rect x="1856" y="1010.5" width="64" height="29.5" fill="#e3e3e3"/><path d="M1858.6,1027 C1858,1018 1870,1012.8 1888,1012.6 C1902,1012.6 1912,1016.6 1912,1021.8 C1905,1021.2 1899.4,1024 1893.6,1029 C1888.4,1033.6 1884,1036.6 1878,1037.4 C1866,1038 1859,1033.6 1858.6,1027Z" fill="#e8083a"/><text x="1868.6" y="1025.9" font-family="Liberation Sans,sans-serif" font-weight="bold" font-size="8.6" fill="#fff" stroke="#fff" stroke-width="0.3" textLength="36" lengthAdjust="spacingAndGlyphs">Data</text><text x="1877.4" y="1034.8" font-family="Liberation Sans,sans-serif" font-weight="bold" font-style="italic" font-size="9.8" fill="#050505" stroke="#050505" stroke-width="0.3" textLength="39" lengthAdjust="spacingAndGlyphs">Solid</text></svg>
</body>
</html>
